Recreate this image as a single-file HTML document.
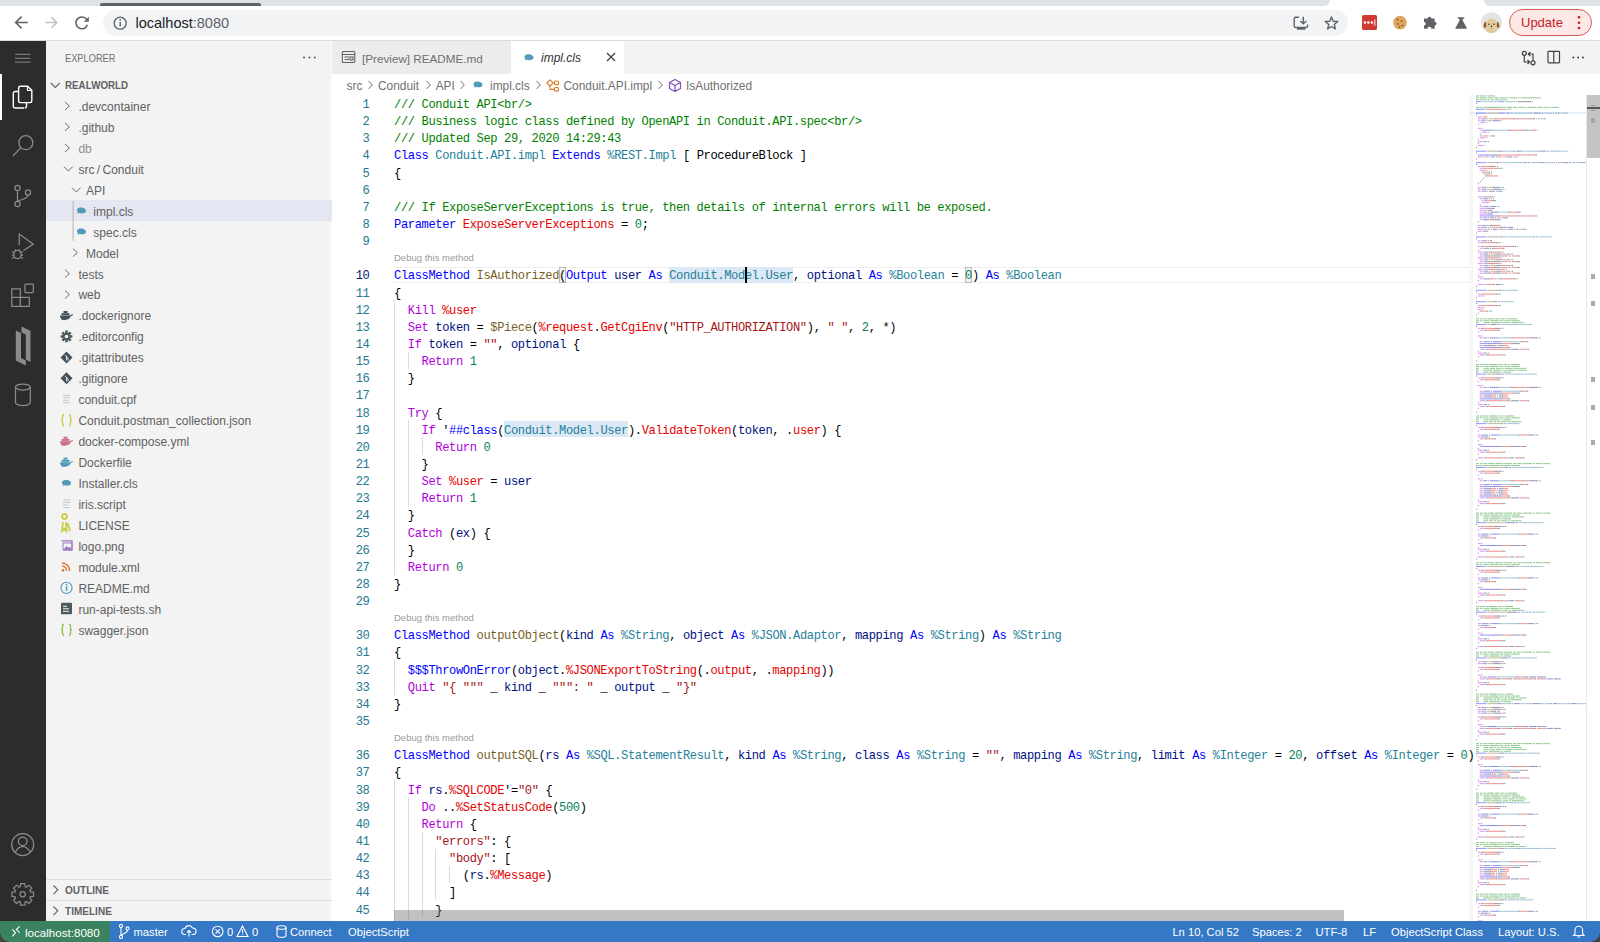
<!DOCTYPE html><html><head><meta charset="utf-8"><style>
*{box-sizing:border-box}
html,body{margin:0;padding:0}
body{width:1600px;height:942px;overflow:hidden;position:relative;background:#fff;font-family:"Liberation Sans",sans-serif;}
.a{position:absolute}
.tx{position:absolute;white-space:pre}
.code{position:absolute;white-space:pre;font-family:"Liberation Mono",monospace;font-size:12.1px;letter-spacing:-0.38px;line-height:17.14px;height:17.14px;color:#000}
.ln{position:absolute;white-space:pre;font-family:"Liberation Mono",monospace;font-size:12.1px;letter-spacing:-0.38px;line-height:17.14px;color:#237893;text-align:right;width:40.4px;left:329px}
.c{color:#008000}.k{color:#0000ff}.t{color:#267f99}.f{color:#795e26}.v{color:#001080}.p{color:#af00db}.r{color:#e50000}.s{color:#a31515}.n{color:#098658}
.lens{position:absolute;left:394px;font-size:9.5px;color:#999;white-space:pre}
.sb{position:absolute;top:921.5px;height:21px;line-height:21px;font-size:11.2px;color:#fff;white-space:pre}
</style></head><body>

<div class="a" style="left:0;top:0;width:1600px;height:41px;background:#fff"></div>
<div class="a" style="left:0;top:0;width:1330px;height:5.5px;background:#dee1e6;border-bottom-right-radius:6px"></div>
<div class="a" style="left:1484px;top:0;width:116px;height:5.5px;background:#dee1e6;border-bottom-left-radius:6px"></div>
<div class="a" style="left:100px;top:2.5px;width:161px;height:3px;background:#5f6368;border-radius:2px 2px 0 0"></div>
<div class="a" style="left:0;top:40px;width:1600px;height:1px;background:#dadce0"></div>
<div class="a" style="left:103px;top:9.5px;width:1245px;height:26px;background:#f1f3f4;border-radius:13px"></div>
<div class="tx" style="left:135.5px;top:14px;font-size:14.5px;line-height:18px;color:#202124">localhost<span style="color:#5f6368">:8080</span></div>
<div class="a" style="left:1509px;top:9px;width:83px;height:27px;background:#fce8e6;border:1.5px solid #d35b52;border-radius:14px"></div>
<div class="tx" style="left:1521px;top:14px;font-size:13px;line-height:18px;color:#c5221f">Update</div>
<div class="a" style="left:0;top:41px;width:46px;height:880px;background:#2c2c2c"></div>
<div class="a" style="left:46px;top:41px;width:285.2px;height:880px;background:#f3f3f3"></div>
<div class="a" style="left:331.5px;top:41px;width:1268.5px;height:33px;background:#f3f3f3"></div>
<div class="a" style="left:331.5px;top:41px;width:179.5px;height:33px;background:#ececec"></div>
<div class="a" style="left:511px;top:41px;width:113px;height:33px;background:#fff"></div>
<div class="tx" style="left:362px;top:49.6px;font-size:11.7px;line-height:17px;color:#6f6f6f">[Preview] README.md</div>
<div class="tx" style="left:541px;top:49.6px;font-size:12px;line-height:17px;color:#333;font-style:italic">impl.cls</div>
<div class="a" style="left:0;top:74px;width:2px;height:45.7px;background:#fff"></div>
<div class="tx" style="left:64.6px;top:51.5px;font-size:10.6px;line-height:12px;color:#6f6f6f;transform:scaleX(0.875);transform-origin:0 0">EXPLORER</div>
<div class="tx" style="left:64.6px;top:78.8px;font-size:10.6px;line-height:12px;color:#616161;font-weight:bold;transform:scaleX(0.925);transform-origin:0 0">REALWORLD</div>
<div class="tx" style="left:78.4px;top:98.90px;font-size:12px;line-height:17px;color:#616161">.devcontainer</div>
<div class="tx" style="left:78.4px;top:119.85px;font-size:12px;line-height:17px;color:#616161">.github</div>
<div class="tx" style="left:78.4px;top:140.80px;font-size:12px;line-height:17px;color:#8e8e8e">db</div>
<div class="tx" style="left:78.4px;top:161.75px;font-size:12px;line-height:17px;color:#616161">src<span style='margin:0 2.4px'>/</span>Conduit</div>
<div class="tx" style="left:86px;top:182.70px;font-size:12px;line-height:17px;color:#616161">API</div>
<div class="a" style="left:46px;top:200.25px;width:285.5px;height:21px;background:#e4e6f1"></div>
<div class="tx" style="left:93.3px;top:203.65px;font-size:12px;line-height:17px;color:#616161">impl.cls</div>
<div class="tx" style="left:93.3px;top:224.60px;font-size:12px;line-height:17px;color:#616161">spec.cls</div>
<div class="tx" style="left:86px;top:245.55px;font-size:12px;line-height:17px;color:#616161">Model</div>
<div class="tx" style="left:78.4px;top:266.50px;font-size:12px;line-height:17px;color:#616161">tests</div>
<div class="tx" style="left:78.4px;top:287.45px;font-size:12px;line-height:17px;color:#616161">web</div>
<div class="tx" style="left:78.4px;top:308.40px;font-size:12px;line-height:17px;color:#616161">.dockerignore</div>
<div class="tx" style="left:78.4px;top:329.35px;font-size:12px;line-height:17px;color:#616161">.editorconfig</div>
<div class="tx" style="left:78.4px;top:350.30px;font-size:12px;line-height:17px;color:#616161">.gitattributes</div>
<div class="tx" style="left:78.4px;top:371.25px;font-size:12px;line-height:17px;color:#616161">.gitignore</div>
<div class="tx" style="left:78.4px;top:392.20px;font-size:12px;line-height:17px;color:#616161">conduit.cpf</div>
<div class="tx" style="left:78.4px;top:413.15px;font-size:12px;line-height:17px;color:#616161">Conduit.postman_collection.json</div>
<div class="tx" style="left:78.4px;top:434.10px;font-size:12px;line-height:17px;color:#616161">docker-compose.yml</div>
<div class="tx" style="left:78.4px;top:455.05px;font-size:12px;line-height:17px;color:#616161">Dockerfile</div>
<div class="tx" style="left:78.4px;top:476.00px;font-size:12px;line-height:17px;color:#616161">Installer.cls</div>
<div class="tx" style="left:78.4px;top:496.95px;font-size:12px;line-height:17px;color:#616161">iris.script</div>
<div class="tx" style="left:78.4px;top:517.90px;font-size:12px;line-height:17px;color:#616161">LICENSE</div>
<div class="tx" style="left:78.4px;top:538.85px;font-size:12px;line-height:17px;color:#616161">logo.png</div>
<div class="tx" style="left:78.4px;top:559.80px;font-size:12px;line-height:17px;color:#616161">module.xml</div>
<div class="tx" style="left:78.4px;top:580.75px;font-size:12px;line-height:17px;color:#616161">README.md</div>
<div class="tx" style="left:78.4px;top:601.70px;font-size:12px;line-height:17px;color:#616161">run-api-tests.sh</div>
<div class="tx" style="left:78.4px;top:622.65px;font-size:12px;line-height:17px;color:#616161">swagger.json</div>
<div class="a" style="left:46px;top:879px;width:285.5px;height:1px;background:#dcdcdc"></div>
<div class="a" style="left:46px;top:900px;width:285.5px;height:1px;background:#dcdcdc"></div>
<div class="tx" style="left:65px;top:884px;font-size:10.8px;line-height:12px;color:#616161;font-weight:bold;transform:scaleX(0.93);transform-origin:0 0">OUTLINE</div>
<div class="tx" style="left:65px;top:905px;font-size:10.8px;line-height:12px;color:#616161;font-weight:bold;transform:scaleX(0.93);transform-origin:0 0">TIMELINE</div>
<div class="tx" style="left:346.5px;top:77.6px;font-size:11.9px;line-height:17px;color:#6f6f6f">src</div>
<div class="tx" style="left:378px;top:77.6px;font-size:11.9px;line-height:17px;color:#6f6f6f">Conduit</div>
<div class="tx" style="left:435.7px;top:77.6px;font-size:11.9px;line-height:17px;color:#6f6f6f">API</div>
<div class="tx" style="left:490px;top:77.6px;font-size:11.9px;line-height:17px;color:#6f6f6f">impl.cls</div>
<div class="tx" style="left:563.5px;top:77.6px;font-size:11.9px;line-height:17px;color:#6f6f6f">Conduit.API.impl</div>
<div class="tx" style="left:686px;top:77.6px;font-size:11.9px;line-height:17px;color:#6f6f6f">IsAuthorized</div>
<div class="a" style="left:394px;top:266.80px;width:1076px;height:16.54px;border-top:1.5px solid #eeeeee;border-bottom:1.5px solid #eeeeee"></div>
<div class="a" style="left:669.28px;top:266.90px;width:123.88px;height:15.64px;background:#dbe8f5"></div>
<div class="a" style="left:504.11px;top:421.16px;width:123.88px;height:15.64px;background:#dbe8f5"></div>
<div class="a" style="left:559.17px;top:266.90px;width:6.88px;height:15.64px;border:1px solid #b9b9b9;background:#f3f3f3"></div>
<div class="a" style="left:965.21px;top:266.90px;width:6.88px;height:15.64px;border:1px solid #b9b9b9;background:#f3f3f3"></div>
<div class="a" style="left:394.00px;top:300.18px;width:1px;height:17.34px;background:#dadada"></div>
<div class="a" style="left:394.00px;top:317.32px;width:1px;height:17.34px;background:#dadada"></div>
<div class="a" style="left:394.00px;top:334.46px;width:1px;height:17.34px;background:#dadada"></div>
<div class="a" style="left:394.00px;top:351.60px;width:1px;height:17.34px;background:#dadada"></div>
<div class="a" style="left:407.76px;top:351.60px;width:1px;height:17.34px;background:#dadada"></div>
<div class="a" style="left:394.00px;top:368.74px;width:1px;height:17.34px;background:#dadada"></div>
<div class="a" style="left:394.00px;top:385.88px;width:1px;height:17.34px;background:#dadada"></div>
<div class="a" style="left:394.00px;top:403.02px;width:1px;height:17.34px;background:#dadada"></div>
<div class="a" style="left:394.00px;top:420.16px;width:1px;height:17.34px;background:#dadada"></div>
<div class="a" style="left:407.76px;top:420.16px;width:1px;height:17.34px;background:#dadada"></div>
<div class="a" style="left:394.00px;top:437.30px;width:1px;height:17.34px;background:#dadada"></div>
<div class="a" style="left:407.76px;top:437.30px;width:1px;height:17.34px;background:#dadada"></div>
<div class="a" style="left:421.53px;top:437.30px;width:1px;height:17.34px;background:#dadada"></div>
<div class="a" style="left:394.00px;top:454.44px;width:1px;height:17.34px;background:#dadada"></div>
<div class="a" style="left:407.76px;top:454.44px;width:1px;height:17.34px;background:#dadada"></div>
<div class="a" style="left:394.00px;top:471.58px;width:1px;height:17.34px;background:#dadada"></div>
<div class="a" style="left:407.76px;top:471.58px;width:1px;height:17.34px;background:#dadada"></div>
<div class="a" style="left:394.00px;top:488.72px;width:1px;height:17.34px;background:#dadada"></div>
<div class="a" style="left:407.76px;top:488.72px;width:1px;height:17.34px;background:#dadada"></div>
<div class="a" style="left:394.00px;top:505.86px;width:1px;height:17.34px;background:#dadada"></div>
<div class="a" style="left:394.00px;top:523.00px;width:1px;height:17.34px;background:#dadada"></div>
<div class="a" style="left:394.00px;top:540.14px;width:1px;height:17.34px;background:#dadada"></div>
<div class="a" style="left:394.00px;top:557.28px;width:1px;height:17.34px;background:#dadada"></div>
<div class="a" style="left:394.00px;top:660.12px;width:1px;height:17.34px;background:#dadada"></div>
<div class="a" style="left:394.00px;top:677.26px;width:1px;height:17.34px;background:#dadada"></div>
<div class="a" style="left:394.00px;top:780.10px;width:1px;height:17.34px;background:#dadada"></div>
<div class="a" style="left:394.00px;top:797.24px;width:1px;height:17.34px;background:#dadada"></div>
<div class="a" style="left:407.76px;top:797.24px;width:1px;height:17.34px;background:#dadada"></div>
<div class="a" style="left:394.00px;top:814.38px;width:1px;height:17.34px;background:#dadada"></div>
<div class="a" style="left:407.76px;top:814.38px;width:1px;height:17.34px;background:#dadada"></div>
<div class="a" style="left:394.00px;top:831.52px;width:1px;height:17.34px;background:#dadada"></div>
<div class="a" style="left:407.76px;top:831.52px;width:1px;height:17.34px;background:#dadada"></div>
<div class="a" style="left:421.53px;top:831.52px;width:1px;height:17.34px;background:#dadada"></div>
<div class="a" style="left:394.00px;top:848.66px;width:1px;height:17.34px;background:#dadada"></div>
<div class="a" style="left:407.76px;top:848.66px;width:1px;height:17.34px;background:#dadada"></div>
<div class="a" style="left:421.53px;top:848.66px;width:1px;height:17.34px;background:#dadada"></div>
<div class="a" style="left:435.29px;top:848.66px;width:1px;height:17.34px;background:#dadada"></div>
<div class="a" style="left:394.00px;top:865.80px;width:1px;height:17.34px;background:#dadada"></div>
<div class="a" style="left:407.76px;top:865.80px;width:1px;height:17.34px;background:#dadada"></div>
<div class="a" style="left:421.53px;top:865.80px;width:1px;height:17.34px;background:#dadada"></div>
<div class="a" style="left:435.29px;top:865.80px;width:1px;height:17.34px;background:#dadada"></div>
<div class="a" style="left:449.06px;top:865.80px;width:1px;height:17.34px;background:#dadada"></div>
<div class="a" style="left:394.00px;top:882.94px;width:1px;height:17.34px;background:#dadada"></div>
<div class="a" style="left:407.76px;top:882.94px;width:1px;height:17.34px;background:#dadada"></div>
<div class="a" style="left:421.53px;top:882.94px;width:1px;height:17.34px;background:#dadada"></div>
<div class="a" style="left:435.29px;top:882.94px;width:1px;height:17.34px;background:#dadada"></div>
<div class="a" style="left:394.00px;top:900.08px;width:1px;height:17.34px;background:#dadada"></div>
<div class="a" style="left:407.76px;top:900.08px;width:1px;height:17.34px;background:#dadada"></div>
<div class="a" style="left:421.53px;top:900.08px;width:1px;height:17.34px;background:#dadada"></div>
<div class="a" style="left:394.00px;top:917.22px;width:1px;height:17.34px;background:#dadada"></div>
<div class="a" style="left:407.76px;top:917.22px;width:1px;height:17.34px;background:#dadada"></div>
<div class="ln" style="top:97.00px;color:#237893">1</div>
<div class="code" style="left:394.0px;top:97.00px"><span class="c">/// Conduit API&lt;br/&gt;</span></div>
<div class="ln" style="top:114.14px;color:#237893">2</div>
<div class="code" style="left:394.0px;top:114.14px"><span class="c">/// Business logic class defined by OpenAPI in Conduit.API.spec&lt;br/&gt;</span></div>
<div class="ln" style="top:131.28px;color:#237893">3</div>
<div class="code" style="left:394.0px;top:131.28px"><span class="c">/// Updated Sep 29, 2020 14:29:43</span></div>
<div class="ln" style="top:148.42px;color:#237893">4</div>
<div class="code" style="left:394.0px;top:148.42px"><span class="k">Class</span> <span class="t">Conduit.API.impl</span> <span class="k">Extends</span> <span class="t">%REST.Impl</span> [ ProcedureBlock ]</div>
<div class="ln" style="top:165.56px;color:#237893">5</div>
<div class="code" style="left:394.0px;top:165.56px">{</div>
<div class="ln" style="top:182.70px;color:#237893">6</div>
<div class="code" style="left:394.0px;top:182.70px"></div>
<div class="ln" style="top:199.84px;color:#237893">7</div>
<div class="code" style="left:394.0px;top:199.84px"><span class="c">/// If ExposeServerExceptions is true, then details of internal errors will be exposed.</span></div>
<div class="ln" style="top:216.98px;color:#237893">8</div>
<div class="code" style="left:394.0px;top:216.98px"><span class="k">Parameter</span> <span class="r">ExposeServerExceptions</span> = <span class="n">0</span>;</div>
<div class="ln" style="top:234.12px;color:#237893">9</div>
<div class="code" style="left:394.0px;top:234.12px"></div>
<div class="lens" style="top:250.76px;line-height:14px">Debug this method</div>
<div class="ln" style="top:268.40px;color:#0b216f">10</div>
<div class="code" style="left:394.0px;top:268.40px"><span class="k">ClassMethod</span> <span class="f">IsAuthorized</span>(<span class="k">Output</span> <span class="v">user</span> <span class="k">As</span> <span class="t">Conduit.Model.User</span>, <span class="v">optional</span> <span class="k">As</span> <span class="t">%Boolean</span> = <span class="n">0</span>) <span class="k">As</span> <span class="t">%Boolean</span></div>
<div class="ln" style="top:285.54px;color:#237893">11</div>
<div class="code" style="left:394.0px;top:285.54px">{</div>
<div class="ln" style="top:302.68px;color:#237893">12</div>
<div class="code" style="left:394.0px;top:302.68px">  <span class="p">Kill</span> <span class="r">%user</span></div>
<div class="ln" style="top:319.82px;color:#237893">13</div>
<div class="code" style="left:394.0px;top:319.82px">  <span class="p">Set</span> <span class="v">token</span> = <span class="f">$Piece</span>(<span class="r">%request</span>.<span class="r">GetCgiEnv</span>(<span class="s">&quot;HTTP_AUTHORIZATION&quot;</span>), <span class="s">&quot; &quot;</span>, <span class="n">2</span>, *)</div>
<div class="ln" style="top:336.96px;color:#237893">14</div>
<div class="code" style="left:394.0px;top:336.96px">  <span class="p">If</span> <span class="v">token</span> = <span class="s">&quot;&quot;</span>, <span class="v">optional</span> {</div>
<div class="ln" style="top:354.10px;color:#237893">15</div>
<div class="code" style="left:394.0px;top:354.10px">    <span class="p">Return</span> <span class="n">1</span></div>
<div class="ln" style="top:371.24px;color:#237893">16</div>
<div class="code" style="left:394.0px;top:371.24px">  }</div>
<div class="ln" style="top:388.38px;color:#237893">17</div>
<div class="code" style="left:394.0px;top:388.38px"></div>
<div class="ln" style="top:405.52px;color:#237893">18</div>
<div class="code" style="left:394.0px;top:405.52px">  <span class="p">Try</span> {</div>
<div class="ln" style="top:422.66px;color:#237893">19</div>
<div class="code" style="left:394.0px;top:422.66px">    <span class="p">If</span> &#x27;<span class="k">##class</span>(<span class="t">Conduit.Model.User</span>).<span class="r">ValidateToken</span>(<span class="v">token</span>, .<span class="r">user</span>) {</div>
<div class="ln" style="top:439.80px;color:#237893">20</div>
<div class="code" style="left:394.0px;top:439.80px">      <span class="p">Return</span> <span class="n">0</span></div>
<div class="ln" style="top:456.94px;color:#237893">21</div>
<div class="code" style="left:394.0px;top:456.94px">    }</div>
<div class="ln" style="top:474.08px;color:#237893">22</div>
<div class="code" style="left:394.0px;top:474.08px">    <span class="p">Set</span> <span class="r">%user</span> = <span class="v">user</span></div>
<div class="ln" style="top:491.22px;color:#237893">23</div>
<div class="code" style="left:394.0px;top:491.22px">    <span class="p">Return</span> <span class="n">1</span></div>
<div class="ln" style="top:508.36px;color:#237893">24</div>
<div class="code" style="left:394.0px;top:508.36px">  }</div>
<div class="ln" style="top:525.50px;color:#237893">25</div>
<div class="code" style="left:394.0px;top:525.50px">  <span class="p">Catch</span> (<span class="v">ex</span>) {</div>
<div class="ln" style="top:542.64px;color:#237893">26</div>
<div class="code" style="left:394.0px;top:542.64px">  }</div>
<div class="ln" style="top:559.78px;color:#237893">27</div>
<div class="code" style="left:394.0px;top:559.78px">  <span class="p">Return</span> <span class="n">0</span></div>
<div class="ln" style="top:576.92px;color:#237893">28</div>
<div class="code" style="left:394.0px;top:576.92px">}</div>
<div class="ln" style="top:594.06px;color:#237893">29</div>
<div class="code" style="left:394.0px;top:594.06px"></div>
<div class="lens" style="top:610.70px;line-height:14px">Debug this method</div>
<div class="ln" style="top:628.34px;color:#237893">30</div>
<div class="code" style="left:394.0px;top:628.34px"><span class="k">ClassMethod</span> <span class="f">outputObject</span>(<span class="v">kind</span> <span class="k">As</span> <span class="t">%String</span>, <span class="v">object</span> <span class="k">As</span> <span class="t">%JSON.Adaptor</span>, <span class="v">mapping</span> <span class="k">As</span> <span class="t">%String</span>) <span class="k">As</span> <span class="t">%String</span></div>
<div class="ln" style="top:645.48px;color:#237893">31</div>
<div class="code" style="left:394.0px;top:645.48px">{</div>
<div class="ln" style="top:662.62px;color:#237893">32</div>
<div class="code" style="left:394.0px;top:662.62px">  <span class="k">$$$ThrowOnError</span>(<span class="v">object</span>.<span class="r">%JSONExportToString</span>(.<span class="r">output</span>, .<span class="r">mapping</span>))</div>
<div class="ln" style="top:679.76px;color:#237893">33</div>
<div class="code" style="left:394.0px;top:679.76px">  <span class="p">Quit</span> <span class="s">&quot;{ &quot;&quot;&quot;</span> _ <span class="v">kind</span> _ <span class="s">&quot;&quot;&quot;: &quot;</span> _ <span class="v">output</span> _ <span class="s">&quot;}&quot;</span></div>
<div class="ln" style="top:696.90px;color:#237893">34</div>
<div class="code" style="left:394.0px;top:696.90px">}</div>
<div class="ln" style="top:714.04px;color:#237893">35</div>
<div class="code" style="left:394.0px;top:714.04px"></div>
<div class="lens" style="top:730.68px;line-height:14px">Debug this method</div>
<div class="ln" style="top:748.32px;color:#237893">36</div>
<div class="code" style="left:394.0px;top:748.32px"><span class="k">ClassMethod</span> <span class="f">outputSQL</span>(<span class="v">rs</span> <span class="k">As</span> <span class="t">%SQL.StatementResult</span>, <span class="v">kind</span> <span class="k">As</span> <span class="t">%String</span>, <span class="v">class</span> <span class="k">As</span> <span class="t">%String</span> = <span class="s">&quot;&quot;</span>, <span class="v">mapping</span> <span class="k">As</span> <span class="t">%String</span>, <span class="v">limit</span> <span class="k">As</span> <span class="t">%Integer</span> = <span class="n">20</span>, <span class="v">offset</span> <span class="k">As</span> <span class="t">%Integer</span> = <span class="n">0</span>)</div>
<div class="ln" style="top:765.46px;color:#237893">37</div>
<div class="code" style="left:394.0px;top:765.46px">{</div>
<div class="ln" style="top:782.60px;color:#237893">38</div>
<div class="code" style="left:394.0px;top:782.60px">  <span class="p">If</span> <span class="v">rs</span>.<span class="r">%SQLCODE</span>&#x27;=<span class="s">&quot;0&quot;</span> {</div>
<div class="ln" style="top:799.74px;color:#237893">39</div>
<div class="code" style="left:394.0px;top:799.74px">    <span class="p">Do</span> ..<span class="r">%SetStatusCode</span>(<span class="n">500</span>)</div>
<div class="ln" style="top:816.88px;color:#237893">40</div>
<div class="code" style="left:394.0px;top:816.88px">    <span class="p">Return</span> {</div>
<div class="ln" style="top:834.02px;color:#237893">41</div>
<div class="code" style="left:394.0px;top:834.02px">      <span class="s">&quot;errors&quot;</span>: {</div>
<div class="ln" style="top:851.16px;color:#237893">42</div>
<div class="code" style="left:394.0px;top:851.16px">        <span class="s">&quot;body&quot;</span>: [</div>
<div class="ln" style="top:868.30px;color:#237893">43</div>
<div class="code" style="left:394.0px;top:868.30px">          (<span class="v">rs</span>.<span class="r">%Message</span>)</div>
<div class="ln" style="top:885.44px;color:#237893">44</div>
<div class="code" style="left:394.0px;top:885.44px">        ]</div>
<div class="ln" style="top:902.58px;color:#237893">45</div>
<div class="code" style="left:394.0px;top:902.58px">      }</div>
<div class="ln" style="top:919.72px;color:#237893">46</div>
<div class="code" style="left:394.0px;top:919.72px">    }</div>
<div class="a" style="left:744.98px;top:266.90px;width:2px;height:16.14px;background:#000"></div>
<div class="a" style="left:1470px;top:112.14px;width:116px;height:1.91px;background:#e8f0fa"></div>
<div class="a" style="left:1467px;top:94.5px;width:6px;height:826.5px;background:linear-gradient(to right, rgba(0,0,0,0), rgba(0,0,0,0.04))"></div>
<div class="a" style="left:394.4px;top:910px;width:949.3px;height:10.6px;background:rgba(100,100,100,0.4)"></div>
<div class="a" style="left:1586px;top:94.5px;width:1px;height:826.5px;background:#e9e9e9"></div>
<div class="a" style="left:1587px;top:95px;width:13px;height:62.6px;background:#c4c4c4"></div>
<div class="a" style="left:1587px;top:107px;width:13px;height:2px;background:#555"></div>
<div class="a" style="left:1591px;top:105px;width:4px;height:1.3px;background:#999"></div>
<div class="a" style="left:1591px;top:109.8px;width:4px;height:1.3px;background:#999"></div>
<div class="a" style="left:1591px;top:117.5px;width:4px;height:5.5px;background:#a5a5a5"></div>
<div class="a" style="left:1591px;top:274.3px;width:4px;height:5px;background:#aaa"></div>
<div class="a" style="left:1591px;top:301.1px;width:4px;height:5px;background:#aaa"></div>
<div class="a" style="left:1591px;top:376.5px;width:4px;height:5px;background:#aaa"></div>
<div class="a" style="left:1591px;top:405.3px;width:4px;height:5px;background:#aaa"></div>
<div class="a" style="left:1591px;top:439.5px;width:4px;height:5px;background:#aaa"></div>
<div class="a" style="left:0;top:921px;width:1600px;height:21px;background:#3478c6"></div>
<div class="a" style="left:0;top:921px;width:110px;height:21px;background:#3b8360"></div>
<div class="sb" style="left:25px;font-size:11.6px">localhost:8080</div>
<div class="sb" style="left:133.5px">master</div>
<div class="sb" style="left:227px">0</div>
<div class="sb" style="left:252px">0</div>
<div class="sb" style="left:290px">Connect</div>
<div class="sb" style="left:348px">ObjectScript</div>
<div class="sb" style="left:1172.4px">Ln 10, Col 52</div>
<div class="sb" style="left:1252px">Spaces: 2</div>
<div class="sb" style="left:1315.5px">UTF-8</div>
<div class="sb" style="left:1363px">LF</div>
<div class="sb" style="left:1391px">ObjectScript Class</div>
<div class="sb" style="left:1498px">Layout: U.S.</div>
<div class="a" style="left:0;top:932px;width:10px;height:10px;background:radial-gradient(circle at 100% 0%, transparent 9.5px, #444 10px)"></div>
<div class="a" style="left:1590px;top:932px;width:10px;height:10px;background:radial-gradient(circle at 0% 0%, transparent 9.5px, #444 10px)"></div>
<svg class="a" style="left:0;top:0" width="1600" height="942" viewBox="0 0 1600 942"><g fill="none" stroke="#5f6368" stroke-width="1.6" stroke-linecap="square"><path d="M27 22.5H16M21 17.2L15.7 22.5L21 27.8"/></g><g fill="none" stroke="#bdc1c6" stroke-width="1.6"><path d="M45.5 22.5H56.8M51.5 17.2L56.8 22.5L51.5 27.8"/></g><g fill="none" stroke="#5f6368" stroke-width="1.6"><path d="M86.6 19.4A5.9 5.9 0 1 0 87.4 24.8"/></g><path d="M88.9 16.8V21.8H83.8Z" fill="#5f6368"/><circle cx="120.2" cy="23.2" r="6" fill="none" stroke="#5f6368" stroke-width="1.3"/><rect x="119.5" y="21.8" width="1.4" height="4.5" fill="#5f6368"/><circle cx="120.2" cy="19.8" r="0.9" fill="#5f6368"/><g fill="none" stroke="#5f6368" stroke-width="1.4"><path d="M1299 17.3H1295.6A1.4 1.4 0 0 0 1294.2 18.7V26.1A1.4 1.4 0 0 0 1295.6 27.5H1306.2A1.4 1.4 0 0 0 1307.6 26.1V24.6"/><path d="M1303.3 16.8V23.8M1300.3 20.9L1303.3 23.8L1306.3 20.9"/></g><rect x="1297" y="27.5" width="8.3" height="2.2" fill="#5f6368"/><polygon points="1331.50,17.00 1333.20,21.25 1337.78,21.56 1334.26,24.50 1335.38,28.94 1331.50,26.50 1327.62,28.94 1328.74,24.50 1325.22,21.56 1329.80,21.25" fill="none" stroke="#5f6368" stroke-width="1.4" stroke-linejoin="round"/><rect x="1362" y="15" width="15" height="15" rx="1.5" fill="#cf3a34"/><circle cx="1364.9" cy="22.6" r="1.25" fill="#fff"/><circle cx="1368.4" cy="22.6" r="1.25" fill="#fff"/><circle cx="1371.9" cy="22.6" r="1.25" fill="#fff"/><rect x="1374.4" y="19.3" width="0.9" height="6.6" fill="#fff"/><circle cx="1400" cy="22.6" r="6.8" fill="#dba55c"/><circle cx="1397.5" cy="19.5" r="0.8" fill="#6b3f1d"/><circle cx="1401.5" cy="21" r="0.8" fill="#6b3f1d"/><circle cx="1398" cy="24" r="0.8" fill="#6b3f1d"/><circle cx="1402.5" cy="25.5" r="0.8" fill="#6b3f1d"/><circle cx="1399.5" cy="27" r="0.8" fill="#6b3f1d"/><path d="M1424 18.6H1427.6A1.9 1.9 0 1 1 1431.4 18.6H1434.7V21.7A1.9 1.9 0 1 1 1434.7 25.5V28.7H1431.4A1.9 1.9 0 0 0 1427.6 28.7H1424V25.5A1.7 1.7 0 0 0 1424 21.9Z" fill="#5f6368"/><path d="M1457.8 17.2H1464.2V18.8H1462.8V20.8L1466.9 28.1Q1467.1 28.8 1466.3 28.8H1455.9Q1455.1 28.8 1455.4 28.1L1459.4 20.8V18.8H1457.8Z" fill="#5f6368"/><circle cx="1491.5" cy="22.7" r="10.5" fill="#e3e3e3"/><clipPath id="av"><circle cx="1491.5" cy="22.7" r="10.5"/></clipPath><g clip-path="url(#av)"><ellipse cx="1491.5" cy="26.5" rx="6.4" ry="7.8" fill="#e3c99e"/><path d="M1486 21.5Q1483 23 1483.8 28L1486.2 27Z M1497 21.5Q1500 23 1499.2 28L1496.8 27Z" fill="#8a5a2b"/><circle cx="1488.9" cy="24.3" r="0.8" fill="#333"/><circle cx="1494.1" cy="24.3" r="0.8" fill="#333"/><circle cx="1491.5" cy="26.3" r="0.8" fill="#222"/><ellipse cx="1491.5" cy="28.2" rx="0.9" ry="0.5" fill="#c98a7a"/></g><circle cx="1579" cy="17.2" r="1.3" fill="#c5221f"/><circle cx="1579" cy="22.7" r="1.3" fill="#c5221f"/><circle cx="1579" cy="28.1" r="1.3" fill="#c5221f"/><g stroke="#8b8b8b" stroke-width="1.25" fill="none"><path d="M15 54.3H30.5M15 58.3H30.5M15 62.2H30.5" stroke="#777"/><path d="M24 108H15A1.8 1.8 0 0 1 13.3 106.2V93.3A1.8 1.8 0 0 1 15 91.5H18.6" stroke="#fff" stroke-width="1.4"/><path d="M26.5 102.6V106.2A1.8 1.8 0 0 1 24.7 108" stroke="#fff" stroke-width="1.4"/><path d="M20.4 86.2H27.6L31.8 90.4V100.8A1.8 1.8 0 0 1 30 102.6H20.4A1.8 1.8 0 0 1 18.6 100.8V88A1.8 1.8 0 0 1 20.4 86.2Z" stroke="#fff" stroke-width="1.4"/><path d="M27.5 86.5V90.5H31.5" stroke="#fff" stroke-width="1.2"/><circle cx="25.8" cy="142.7" r="7"/><path d="M20.8 147.8L13 156"/><circle cx="17.5" cy="188" r="2.6"/><circle cx="28" cy="192.5" r="2.6"/><circle cx="17.5" cy="204" r="2.6"/><path d="M17.5 190.6V201.4M28 195.1C28 199 22 199 18.5 201"/><path d="M19.2 245V234L33.3 244.2L23.5 250.5"/><ellipse cx="17.5" cy="254.5" rx="3.6" ry="4.2"/><path d="M12 251.5L14.3 252.8M12 255H14M12 258.5L14.3 257.2M23 251.5L20.7 252.8M23 255H21M23 258.5L20.7 257.2M15 249.5L16 250.8M20 249.5L19 250.8"/><path d="M11.8 288.8H20.3V297.3H29.3V306.3H11.8Z M11.8 297.3H20.3V306.3"/><rect x="25" y="284.2" width="8.3" height="8.3" rx="0.8"/><path d="M15.5 387V402.5A7.4 3 0 0 0 30.3 402.5V387"/><ellipse cx="22.9" cy="387" rx="7.4" ry="3"/><circle cx="22.7" cy="844.6" r="11"/><circle cx="22.7" cy="841.3" r="4.3"/><path d="M15.2 852.5C17 848.5 20 846.6 22.7 846.6C25.4 846.6 28.4 848.5 30.2 852.5"/></g><path d="M15.8 330.5L21 333V358L25.8 360.5V365.5L15.8 360.5Z" fill="#8b8b8b"/><path d="M21.5 326.5L30.5 331V362L25.8 359.5V334.5L21.5 332.5Z" fill="#8b8b8b"/><polygon points="30.34,891.94 33.48,892.11 33.48,896.49 30.34,896.66 29.78,898.03 31.87,900.38 28.78,903.47 26.43,901.38 25.06,901.94 24.89,905.08 20.51,905.08 20.34,901.94 18.97,901.38 16.62,903.47 13.53,900.38 15.62,898.03 15.06,896.66 11.92,896.49 11.92,892.11 15.06,891.94 15.62,890.57 13.53,888.22 16.62,885.13 18.97,887.22 20.34,886.66 20.51,883.52 24.89,883.52 25.06,886.66 26.43,887.22 28.78,885.13 31.87,888.22 29.78,890.57" fill="none" stroke="#8b8b8b" stroke-width="1.25" stroke-linejoin="round"/><circle cx="22.7" cy="894.3" r="2.6" fill="none" stroke="#8b8b8b" stroke-width="1.25"/><circle cx="304" cy="57.5" r="1.05" fill="#616161"/><circle cx="309.5" cy="57.5" r="1.05" fill="#616161"/><circle cx="314.8" cy="57.5" r="1.05" fill="#616161"/><path d="M50.8 83L55.3 87.5L59.8 83" fill="none" stroke="#616161" stroke-width="1.1"/><path d="M65 102.0L69.3 106.0L65 110.0" fill="none" stroke="#6a6a6a" stroke-width="1"/><path d="M65 122.95L69.3 126.95L65 130.95" fill="none" stroke="#6a6a6a" stroke-width="1"/><path d="M65 143.9L69.3 147.9L65 151.9" fill="none" stroke="#6a6a6a" stroke-width="1"/><path d="M64 166.65L68.3 171.04999999999998L72.6 166.65" fill="none" stroke="#6a6a6a" stroke-width="1"/><path d="M72 187.60000000000002L76.3 192.0L80.6 187.60000000000002" fill="none" stroke="#6a6a6a" stroke-width="1"/><path d="M77 209.55C78 207.55 81 207.15 83.5 207.95C85.5 208.55 86.5 210.25 85.8 211.75C85 213.55 81.5 213.75 79.5 212.95L77.3 213.55L78 212.05C77.2 211.35 76.8 210.45 77 209.55Z" fill="#519aba"/><path d="M77 230.5C78 228.5 81 228.1 83.5 228.89999999999998C85.5 229.5 86.5 231.2 85.8 232.7C85 234.5 81.5 234.7 79.5 233.89999999999998L77.3 234.5L78 233.0C77.2 232.29999999999998 76.8 231.39999999999998 77 230.5Z" fill="#519aba"/><path d="M73 248.65L77.3 252.65L73 256.65" fill="none" stroke="#6a6a6a" stroke-width="1"/><path d="M65 269.6L69.3 273.6L65 277.6" fill="none" stroke="#6a6a6a" stroke-width="1"/><path d="M65 290.54999999999995L69.3 294.54999999999995L65 298.54999999999995" fill="none" stroke="#6a6a6a" stroke-width="1"/><path d="M60 315.5H70.5C71.3 314.3 72.5 314.0 73 314.7C72.5 315.8 71.5 316.1 71 316.1C69.5 320.0 65 320.5 62.5 320.0C60.8 319.0 60 317.3 60 315.5Z" fill="#41535b"/><rect x="61.5" y="313.2" width="8" height="2" fill="#41535b"/><rect x="63.5" y="311.0" width="4" height="2" fill="#41535b"/><polygon points="70.30,335.19 72.36,335.14 72.36,337.76 70.30,337.71 70.07,338.25 71.57,339.66 69.71,341.52 68.30,340.02 67.76,340.25 67.81,342.31 65.19,342.31 65.24,340.25 64.70,340.02 63.29,341.52 61.43,339.66 62.93,338.25 62.70,337.71 60.64,337.76 60.64,335.14 62.70,335.19 62.93,334.65 61.43,333.24 63.29,331.38 64.70,332.88 65.24,332.65 65.19,330.59 67.81,330.59 67.76,332.65 68.30,332.88 69.71,331.38 71.57,333.24 70.07,334.65" fill="#4d5a5e"/><circle cx="66.5" cy="336.45" r="1.8" fill="#f3f3f3"/><path d="M66.5 351.4L72.5 357.4L66.5 363.4L60.5 357.4Z" fill="#41535b"/><path d="M65 354.9L68 357.9V360.4M66.5 356.4V360.4" stroke="#f3f3f3" stroke-width="0.9" fill="none"/><path d="M66.5 372.34999999999997L72.5 378.34999999999997L66.5 384.34999999999997L60.5 378.34999999999997Z" fill="#41535b"/><path d="M65 375.84999999999997L68 378.84999999999997V381.34999999999997M66.5 377.34999999999997V381.34999999999997" stroke="#f3f3f3" stroke-width="0.9" fill="none"/><path d="M63 395.3H70M63 397.8H70M63 400.3H68.5M63 402.8H70" stroke="#c5c5c5" stroke-width="1"/><path d="M64 414.75C62.5 414.75 62.5 415.75 62.5 417.25V418.75C62.5 419.75 62 420.25 61 420.25C62 420.25 62.5 420.75 62.5 421.75V423.25C62.5 424.75 62.5 425.75 64 425.75M69 414.75C70.5 414.75 70.5 415.75 70.5 417.25V418.75C70.5 419.75 71 420.25 72 420.25C71 420.25 70.5 420.75 70.5 421.75V423.25C70.5 424.75 70.5 425.75 69 425.75" fill="none" stroke="#cbcb41" stroke-width="1.3"/><path d="M60 441.2H70.5C71.3 440.0 72.5 439.7 73 440.4C72.5 441.5 71.5 441.8 71 441.8C69.5 445.7 65 446.2 62.5 445.7C60.8 444.7 60 443.0 60 441.2Z" fill="#cc6f8a"/><rect x="61.5" y="438.9" width="8" height="2" fill="#cc6f8a"/><rect x="63.5" y="436.7" width="4" height="2" fill="#cc6f8a"/><path d="M60 462.15H70.5C71.3 460.95 72.5 460.65 73 461.34999999999997C72.5 462.45 71.5 462.75 71 462.75C69.5 466.65 65 467.15 62.5 466.65C60.8 465.65 60 463.95 60 462.15Z" fill="#519aba"/><rect x="61.5" y="459.84999999999997" width="8" height="2" fill="#519aba"/><rect x="63.5" y="457.65" width="4" height="2" fill="#519aba"/><path d="M62 481.9C63 479.9 66 479.49999999999994 68.5 480.29999999999995C70.5 480.9 71.5 482.59999999999997 70.8 484.09999999999997C70 485.9 66.5 486.09999999999997 64.5 485.29999999999995L62.3 485.9L63 484.4C62.2 483.7 61.8 482.79999999999995 62 481.9Z" fill="#519aba"/><path d="M63 500.05H70M63 502.55H70M63 505.05H68.5M63 507.55H70" stroke="#c5c5c5" stroke-width="1"/><path d="M64.5 519.0A2.5 2.5 0 1 1 64.6 519.0M63 522.0L62 531.0L64.5 529.0L66.5 531.0L66 522.0M67.5 523.0L70 531.0" stroke="#cbcb41" stroke-width="1.8" fill="none"/><path d="M61.5 540.95H72V549.95H63" stroke="#a074c4" stroke-width="1.2" fill="none"/><path d="M63 549.95V542.95H72V549.95Z" fill="none" stroke="#a074c4" stroke-width="1"/><path d="M63.5 549.45L66.5 545.95L68.5 547.95L70 546.45L71.5 549.45Z" fill="#a074c4"/><circle cx="63" cy="570.4" r="1.3" fill="#e37933"/><path d="M62 565.9A4.5 4.5 0 0 1 66.5 570.9M62 562.9A7.5 7.5 0 0 1 69.5 570.9" stroke="#e37933" stroke-width="1.5" fill="none"/><circle cx="66.5" cy="587.8499999999999" r="5.6" fill="none" stroke="#519aba" stroke-width="1.1"/><rect x="65.8" y="586.3499999999999" width="1.5" height="4.5" fill="#519aba"/><circle cx="66.5" cy="584.6499999999999" r="0.9" fill="#519aba"/><rect x="61" y="602.8" width="11" height="11.5" rx="0.8" fill="#4d5a5e"/><path d="M63 606.3H67M63 608.8H69M63 611.3H69" stroke="#f3f3f3" stroke-width="1"/><path d="M64 624.25C62.5 624.25 62.5 625.25 62.5 626.75V628.25C62.5 629.25 62 629.75 61 629.75C62 629.75 62.5 630.25 62.5 631.25V632.75C62.5 634.25 62.5 635.25 64 635.25M69 624.25C70.5 624.25 70.5 625.25 70.5 626.75V628.25C70.5 629.25 71 629.75 72 629.75C71 629.75 70.5 630.25 70.5 631.25V632.75C70.5 634.25 70.5 635.25 69 635.25" fill="none" stroke="#8dc149" stroke-width="1.3"/><rect x="72.6" y="200.8" width="1" height="40" fill="#b3b3b3"/><path d="M53.5 885.5L57.8 889.8L53.5 894.1M53.5 906.5L57.8 910.8L53.5 915.1" fill="none" stroke="#616161" stroke-width="1.1"/><g fill="none" stroke="#616161" stroke-width="1.1"><rect x="342.3" y="51.5" width="12.5" height="11" rx="1"/><path d="M342.3 54.5H354.8M344.5 57H349M344.5 59.5H349"/><rect x="350" y="57" width="3" height="3"/></g><path d="M524.5 56.3C525.5 54.3 528.5 53.9 531.0 54.7C533.0 55.3 534.0 57.0 533.3 58.5C532.5 60.3 529.0 60.5 527.0 59.7L524.8 60.3L525.5 58.8C524.7 58.1 524.3 57.2 524.5 56.3Z" fill="#519aba"/><path d="M607 53L615 61M615 53L607 61" stroke="#424242" stroke-width="1.3"/><g fill="none" stroke="#424242" stroke-width="1.2"><circle cx="1524.3" cy="53.3" r="2"/><circle cx="1533" cy="62.8" r="2"/><path d="M1524.3 55.3V62H1529.5M1527.5 60L1529.5 62L1527.5 64M1533 60.8V54H1528.3M1530.3 52L1528.3 54L1530.3 56"/><rect x="1548" y="51.3" width="11.5" height="11.5" rx="0.8"/><path d="M1553.75 51.3V62.8"/></g><circle cx="1573.3" cy="57.5" r="1" fill="#424242"/><circle cx="1578.1" cy="57.5" r="1" fill="#424242"/><circle cx="1582.9" cy="57.5" r="1" fill="#424242"/><path d="M368.5 81L372.3 85L368.5 89" fill="none" stroke="#6f6f6f" stroke-width="1"/><path d="M426.5 81L430.3 85L426.5 89" fill="none" stroke="#6f6f6f" stroke-width="1"/><path d="M460.5 81L464.3 85L460.5 89" fill="none" stroke="#6f6f6f" stroke-width="1"/><path d="M536.5 81L540.3 85L536.5 89" fill="none" stroke="#6f6f6f" stroke-width="1"/><path d="M658.5 81L662.3 85L658.5 89" fill="none" stroke="#6f6f6f" stroke-width="1"/><path d="M473.5 83.5C474.5 81.5 477.5 81.10000000000001 480.0 81.9C482.0 82.5 483.0 84.2 482.3 85.7C481.5 87.5 478.0 87.7 476.0 86.9L473.8 87.5L474.5 86.0C473.7 85.3 473.3 84.4 473.5 83.5Z" fill="#519aba"/><g fill="none" stroke="#d67e2c" stroke-width="1.15" stroke-linejoin="round"><path d="M550 79.8L553.2 83L550 86.2L546.8 83Z"/><path d="M550 86.2V89.3H554M553.2 83H554.5"/><rect x="554.5" y="81" width="4" height="3.6" rx="1"/><rect x="554.5" y="87.5" width="4" height="3.6" rx="1"/></g><g fill="none" stroke="#7d4fbf" stroke-width="1.2" stroke-linejoin="round"><path d="M675 79.5L680.5 82.5V88.5L675 91.5L669.5 88.5V82.5Z M669.5 82.5L675 85.5L680.5 82.5M675 85.5V91.5"/></g><g opacity="0.6" stroke-width="1.0" stroke-dasharray="0.75 0.2" fill="none"><path stroke="#008000" d="M1476.00 95.95h2.86M1479.81 95.95h6.66M1487.42 95.95h7.62M1476.00 97.86h2.86M1479.81 97.86h7.62M1488.38 97.86h4.76M1494.09 97.86h4.76M1499.80 97.86h6.66M1507.42 97.86h1.90M1510.27 97.86h6.66M1517.89 97.86h1.90M1520.74 97.86h19.99M1476.00 99.76h2.86M1479.81 99.76h6.66M1487.42 99.76h2.86M1491.23 99.76h2.86M1495.04 99.76h3.81M1499.80 99.76h7.62M1476.00 107.38h2.86M1479.81 107.38h1.90M1482.66 107.38h20.94M1504.56 107.38h1.90M1507.42 107.38h4.76M1513.13 107.38h3.81M1517.89 107.38h6.66M1525.50 107.38h1.90M1528.36 107.38h7.62M1536.93 107.38h5.71M1543.59 107.38h3.81M1548.35 107.38h1.90M1551.21 107.38h7.62M1476.00 318.83h2.86M1479.81 318.83h2.86M1483.62 318.83h2.86M1487.42 318.83h6.66M1495.04 318.83h4.76M1500.75 318.83h3.81M1505.51 318.83h1.90M1508.37 318.83h8.57M1476.00 320.74h2.86M1479.81 320.74h2.86M1483.62 320.74h5.71M1490.28 320.74h8.57M1499.80 320.74h3.81M1504.56 320.74h5.71M1511.22 320.74h8.57M1476.00 322.64h2.86M1483.62 322.64h6.66M1491.23 322.64h10.47M1502.66 322.64h5.71M1509.32 322.64h1.90M1512.18 322.64h12.38M1476.00 364.56h2.86M1479.81 364.56h4.76M1485.52 364.56h2.86M1489.33 364.56h7.62M1497.90 364.56h4.76M1503.61 364.56h3.81M1508.37 364.56h1.90M1511.22 364.56h8.57M1476.00 366.46h2.86M1479.81 366.46h2.86M1483.62 366.46h5.71M1490.28 366.46h8.57M1499.80 366.46h3.81M1504.56 366.46h5.71M1511.22 366.46h8.57M1476.00 368.37h2.86M1483.62 368.37h5.71M1490.28 368.37h4.76M1495.99 368.37h5.71M1502.66 368.37h1.90M1505.51 368.37h7.62M1514.08 368.37h12.38M1476.00 370.27h2.86M1483.62 370.27h8.57M1493.14 370.27h7.62M1501.70 370.27h1.90M1504.56 370.27h2.86M1508.37 370.27h6.66M1515.98 370.27h1.90M1518.84 370.27h7.62M1476.00 372.18h2.86M1483.62 372.18h4.76M1489.33 372.18h10.47M1500.75 372.18h1.90M1503.61 372.18h7.62M1476.00 415.99h2.86M1479.81 415.99h5.71M1486.47 415.99h1.90M1489.33 415.99h7.62M1497.90 415.99h3.81M1502.66 415.99h1.90M1505.51 415.99h8.57M1476.00 417.89h2.86M1479.81 417.89h2.86M1483.62 417.89h5.71M1490.28 417.89h8.57M1499.80 417.89h3.81M1504.56 417.89h5.71M1511.22 417.89h8.57M1476.00 419.80h2.86M1483.62 419.80h4.76M1489.33 419.80h10.47M1500.75 419.80h1.90M1503.61 419.80h7.62M1476.00 421.70h2.86M1483.62 421.70h4.76M1489.33 421.70h3.81M1494.09 421.70h1.90M1496.94 421.70h2.86M1500.75 421.70h6.66M1508.37 421.70h1.90M1511.22 421.70h10.47M1476.00 463.62h2.86M1479.81 463.62h2.86M1483.62 463.62h3.81M1488.38 463.62h5.71M1495.04 463.62h7.62M1503.61 463.62h8.57M1513.13 463.62h2.86M1516.94 463.62h4.76M1522.65 463.62h9.52M1533.12 463.62h1.90M1535.98 463.62h5.71M1542.64 463.62h7.62M1476.00 465.52h2.86M1479.81 465.52h2.86M1483.62 465.52h5.71M1490.28 465.52h8.57M1499.80 465.52h3.81M1504.56 465.52h5.71M1511.22 465.52h8.57M1476.00 513.14h2.86M1479.81 513.14h2.86M1483.62 513.14h3.81M1488.38 513.14h5.71M1495.04 513.14h7.62M1503.61 513.14h8.57M1513.13 513.14h2.86M1516.94 513.14h4.76M1522.65 513.14h9.52M1533.12 513.14h1.90M1535.98 513.14h5.71M1542.64 513.14h7.62M1476.00 515.05h2.86M1479.81 515.05h2.86M1483.62 515.05h5.71M1490.28 515.05h8.57M1499.80 515.05h3.81M1504.56 515.05h5.71M1511.22 515.05h8.57M1476.00 516.96h2.86M1483.62 516.96h6.66M1491.23 516.96h10.47M1502.66 516.96h5.71M1509.32 516.96h1.90M1512.18 516.96h12.38M1476.00 518.86h2.86M1483.62 518.86h4.76M1489.33 518.86h10.47M1500.75 518.86h1.90M1503.61 518.86h7.62M1476.00 520.77h2.86M1483.62 520.77h4.76M1489.33 520.77h3.81M1494.09 520.77h1.90M1496.94 520.77h2.86M1500.75 520.77h6.66M1508.37 520.77h1.90M1511.22 520.77h10.47M1476.00 562.68h2.86M1479.81 562.68h2.86M1483.62 562.68h3.81M1488.38 562.68h5.71M1495.04 562.68h7.62M1503.61 562.68h8.57M1513.13 562.68h2.86M1516.94 562.68h4.76M1522.65 562.68h9.52M1533.12 562.68h1.90M1535.98 562.68h5.71M1542.64 562.68h7.62M1476.00 564.58h2.86M1479.81 564.58h2.86M1483.62 564.58h5.71M1490.28 564.58h8.57M1499.80 564.58h3.81M1504.56 564.58h5.71M1511.22 564.58h8.57M1476.00 606.49h2.86M1479.81 606.49h5.71M1486.47 606.49h1.90M1489.33 606.49h7.62M1497.90 606.49h3.81M1502.66 606.49h1.90M1505.51 606.49h7.62M1476.00 608.40h2.86M1479.81 608.40h2.86M1483.62 608.40h5.71M1490.28 608.40h8.57M1499.80 608.40h3.81M1504.56 608.40h5.71M1511.22 608.40h8.57M1476.00 610.30h2.86M1483.62 610.30h6.66M1491.23 610.30h10.47M1502.66 610.30h5.71M1509.32 610.30h1.90M1512.18 610.30h12.38M1476.00 652.21h2.86M1479.81 652.21h2.86M1483.62 652.21h3.81M1488.38 652.21h5.71M1495.04 652.21h7.62M1503.61 652.21h8.57M1513.13 652.21h2.86M1516.94 652.21h4.76M1522.65 652.21h9.52M1533.12 652.21h1.90M1535.98 652.21h5.71M1542.64 652.21h7.62M1476.00 654.12h2.86M1479.81 654.12h2.86M1483.62 654.12h5.71M1490.28 654.12h8.57M1499.80 654.12h3.81M1504.56 654.12h5.71M1511.22 654.12h8.57M1476.00 656.02h2.86M1483.62 656.02h4.76M1489.33 656.02h10.47M1500.75 656.02h1.90M1503.61 656.02h7.62M1476.00 694.12h2.86M1479.81 694.12h5.71M1486.47 694.12h1.90M1489.33 694.12h7.62M1497.90 694.12h3.81M1502.66 694.12h1.90M1505.51 694.12h7.62M1476.00 696.03h2.86M1479.81 696.03h2.86M1483.62 696.03h5.71M1490.28 696.03h8.57M1499.80 696.03h3.81M1504.56 696.03h5.71M1511.22 696.03h8.57M1476.00 697.93h2.86M1483.62 697.93h8.57M1493.14 697.93h7.62M1501.70 697.93h1.90M1504.56 697.93h2.86M1508.37 697.93h6.66M1515.98 697.93h1.90M1518.84 697.93h7.62M1476.00 699.84h2.86M1483.62 699.84h4.76M1489.33 699.84h3.81M1494.09 699.84h1.90M1496.94 699.84h2.86M1500.75 699.84h6.66M1508.37 699.84h1.90M1511.22 699.84h10.47M1476.00 701.74h2.86M1483.62 701.74h4.76M1489.33 701.74h10.47M1500.75 701.74h1.90M1503.61 701.74h7.62M1476.00 743.65h2.86M1479.81 743.65h2.86M1483.62 743.65h3.81M1488.38 743.65h5.71M1495.04 743.65h7.62M1503.61 743.65h8.57M1513.13 743.65h2.86M1516.94 743.65h4.76M1522.65 743.65h9.52M1533.12 743.65h1.90M1535.98 743.65h5.71M1542.64 743.65h7.62M1476.00 745.56h2.86M1479.81 745.56h2.86M1483.62 745.56h5.71M1490.28 745.56h8.57M1499.80 745.56h3.81M1504.56 745.56h5.71M1511.22 745.56h8.57M1476.00 747.46h2.86M1483.62 747.46h4.76M1489.33 747.46h3.81M1494.09 747.46h1.90M1496.94 747.46h2.86M1500.75 747.46h6.66M1508.37 747.46h1.90M1511.22 747.46h10.47M1476.00 749.37h2.86M1483.62 749.37h5.71M1490.28 749.37h4.76M1495.99 749.37h5.71M1502.66 749.37h1.90M1505.51 749.37h7.62M1514.08 749.37h12.38M1476.00 751.27h2.86M1483.62 751.27h4.76M1489.33 751.27h10.47M1500.75 751.27h1.90M1503.61 751.27h7.62M1476.00 793.18h2.86M1479.81 793.18h2.86M1483.62 793.18h2.86M1487.42 793.18h6.66M1495.04 793.18h4.76M1500.75 793.18h3.81M1505.51 793.18h1.90M1508.37 793.18h8.57M1476.00 795.09h2.86M1479.81 795.09h2.86M1483.62 795.09h5.71M1490.28 795.09h8.57M1499.80 795.09h3.81M1504.56 795.09h5.71M1511.22 795.09h8.57M1476.00 796.99h2.86M1483.62 796.99h6.66M1491.23 796.99h10.47M1502.66 796.99h5.71M1509.32 796.99h1.90M1512.18 796.99h12.38M1476.00 798.90h2.86M1483.62 798.90h8.57M1493.14 798.90h7.62M1501.70 798.90h1.90M1504.56 798.90h2.86M1508.37 798.90h6.66M1515.98 798.90h1.90M1518.84 798.90h7.62M1476.00 800.80h2.86M1483.62 800.80h6.66M1491.23 800.80h10.47M1502.66 800.80h5.71M1509.32 800.80h1.90M1512.18 800.80h12.38M1476.00 842.71h2.86M1479.81 842.71h5.71M1486.47 842.71h1.90M1489.33 842.71h7.62M1497.90 842.71h3.81M1502.66 842.71h1.90M1505.51 842.71h8.57M1476.00 844.62h2.86M1479.81 844.62h2.86M1483.62 844.62h5.71M1490.28 844.62h8.57M1499.80 844.62h3.81M1504.56 844.62h5.71M1511.22 844.62h8.57M1476.00 846.52h2.86M1483.62 846.52h8.57M1493.14 846.52h7.62M1501.70 846.52h1.90M1504.56 846.52h2.86M1508.37 846.52h6.66M1515.98 846.52h1.90M1518.84 846.52h7.62M1476.00 894.15h2.86M1479.81 894.15h4.76M1485.52 894.15h2.86M1489.33 894.15h7.62M1497.90 894.15h4.76M1503.61 894.15h3.81M1508.37 894.15h1.90M1511.22 894.15h8.57M1476.00 896.05h2.86M1479.81 896.05h2.86M1483.62 896.05h5.71M1490.28 896.05h8.57M1499.80 896.05h3.81M1504.56 896.05h5.71M1511.22 896.05h8.57M1476.00 897.96h2.86M1483.62 897.96h8.57M1493.14 897.96h7.62M1501.70 897.96h1.90M1504.56 897.96h2.86M1508.37 897.96h6.66M1515.98 897.96h1.90M1518.84 897.96h7.62"/><path stroke="#0000ff" d="M1476.00 101.67h4.76M1497.90 101.67h6.66M1476.00 109.29h8.57M1476.00 113.09h10.47M1499.80 113.09h5.71M1511.22 113.09h1.90M1541.69 113.09h1.90M1557.87 113.09h1.90M1483.62 130.24h6.66M1476.00 151.19h10.47M1504.56 151.19h1.90M1522.65 151.19h1.90M1547.40 151.19h1.90M1558.82 151.19h1.90M1477.90 155.00h14.28M1476.00 162.62h10.47M1499.80 162.62h1.90M1528.36 162.62h1.90M1545.50 162.62h1.90M1569.30 162.62h1.90M1490.28 212.15h6.66M1479.81 215.96h14.28M1476.00 236.92h10.47M1504.56 236.92h1.90M1535.98 236.92h1.90M1476.00 290.26h10.47M1501.70 290.26h1.90M1476.00 301.69h10.47M1497.90 301.69h1.90M1476.00 324.55h10.47M1497.90 324.55h1.90M1515.98 324.55h1.90M1490.28 337.88h6.66M1493.14 341.69h6.66M1479.81 343.60h14.28M1479.81 347.41h14.28M1476.00 374.08h10.47M1502.66 374.08h1.90M1520.74 374.08h1.90M1490.28 387.42h6.66M1493.14 391.22h6.66M1479.81 393.13h14.28M1479.81 398.84h14.28M1476.00 423.61h10.47M1503.61 423.61h1.90M1491.23 435.04h6.66M1479.81 446.47h14.28M1476.00 467.43h10.47M1509.32 467.43h1.90M1527.41 467.43h1.90M1490.28 480.76h6.66M1493.14 484.57h6.66M1479.81 486.47h14.28M1479.81 496.00h14.28M1476.00 522.67h10.47M1515.98 522.67h1.90M1527.41 522.67h1.90M1491.23 534.10h6.66M1479.81 545.53h14.28M1476.00 566.49h10.47M1515.98 566.49h1.90M1527.41 566.49h1.90M1491.23 577.92h6.66M1479.81 589.35h14.28M1476.00 612.21h10.47M1517.89 612.21h1.90M1529.31 612.21h1.90M1491.23 623.64h6.66M1479.81 635.07h14.28M1476.00 657.93h10.47M1508.37 657.93h1.90M1520.74 657.93h1.90M1488.38 676.98h6.66M1476.00 703.65h10.47M1502.66 703.65h1.90M1520.74 703.65h1.90M1541.69 703.65h1.90M1558.82 703.65h1.90M1577.86 703.65h1.90M1488.38 726.51h6.66M1476.00 753.18h10.47M1505.51 753.18h1.90M1523.60 753.18h1.90M1490.28 766.51h6.66M1493.14 770.32h6.66M1479.81 772.23h14.28M1479.81 776.04h14.28M1476.00 802.71h10.47M1502.66 802.71h1.90M1514.08 802.71h1.90M1491.23 814.14h6.66M1479.81 825.57h14.28M1476.00 848.43h10.47M1505.51 848.43h1.90M1521.70 848.43h1.90M1539.78 848.43h1.90M1490.28 861.76h6.66M1493.14 865.57h6.66M1479.81 867.48h14.28M1479.81 877.00h14.28M1476.00 899.86h10.47M1505.51 899.86h1.90M1516.94 899.86h1.90M1491.23 911.29h6.66"/><path stroke="#267f99" d="M1481.71 101.67h15.23M1505.51 101.67h9.52M1514.08 113.09h17.14M1544.54 113.09h7.62M1560.73 113.09h7.62M1491.23 130.24h17.14M1507.42 151.19h6.66M1525.50 151.19h12.38M1550.26 151.19h6.66M1561.68 151.19h6.66M1502.66 162.62h19.04M1531.22 162.62h6.66M1548.35 162.62h6.66M1572.15 162.62h6.66M1497.90 212.15h10.47M1507.42 236.92h26.66M1538.83 236.92h13.33M1504.56 290.26h13.33M1500.75 301.69h13.33M1500.75 324.55h13.33M1518.84 324.55h13.33M1497.90 337.88h13.33M1500.75 341.69h19.99M1505.51 374.08h13.33M1523.60 374.08h13.33M1497.90 387.42h13.33M1500.75 391.22h19.99M1506.46 423.61h13.33M1498.85 435.04h19.99M1512.18 467.43h13.33M1530.26 467.43h13.33M1497.90 480.76h13.33M1500.75 484.57h19.99M1518.84 522.67h6.66M1530.26 522.67h13.33M1498.85 534.10h19.99M1518.84 566.49h6.66M1530.26 566.49h13.33M1498.85 577.92h19.99M1520.74 612.21h6.66M1532.17 612.21h13.33M1498.85 623.64h19.99M1511.22 657.93h7.62M1523.60 657.93h13.33M1495.99 676.98h19.99M1505.51 703.65h6.66M1523.60 703.65h6.66M1544.54 703.65h6.66M1561.68 703.65h7.62M1580.72 703.65h5.28M1495.99 726.51h19.99M1508.37 753.18h13.33M1526.46 753.18h13.33M1497.90 766.51h13.33M1500.75 770.32h19.99M1505.51 802.71h6.66M1516.94 802.71h13.33M1498.85 814.14h19.99M1508.37 848.43h6.66M1524.55 848.43h13.33M1542.64 848.43h13.33M1497.90 861.76h13.33M1500.75 865.57h19.99M1508.37 899.86h6.66M1519.79 899.86h13.33M1498.85 911.29h19.99"/><path stroke="#000000" d="M1515.98 101.67h0.95M1517.89 101.67h13.33M1532.17 101.67h0.95M1476.00 103.57h0.95M1507.42 109.29h0.95M1510.27 109.29h0.95M1498.85 113.09h0.95M1531.22 113.09h0.95M1553.11 113.09h0.95M1555.97 113.09h0.95M1476.00 115.00h0.95M1487.42 118.81h0.95M1495.04 118.81h0.95M1503.61 118.81h0.95M1513.13 118.81h0.95M1533.12 118.81h1.90M1538.83 118.81h0.95M1541.69 118.81h0.95M1543.59 118.81h1.90M1486.47 120.72h0.95M1490.28 120.72h0.95M1500.75 120.72h0.95M1477.90 124.53h0.95M1481.71 128.33h0.95M1482.66 130.24h0.95M1490.28 130.24h0.95M1508.37 130.24h1.90M1522.65 130.24h0.95M1528.36 130.24h0.95M1530.26 130.24h0.95M1535.02 130.24h0.95M1536.93 130.24h0.95M1479.81 134.05h0.95M1489.33 135.95h0.95M1477.90 139.76h0.95M1483.62 141.67h0.95M1486.47 141.67h0.95M1488.38 141.67h0.95M1477.90 143.57h0.95M1476.00 147.38h0.95M1498.85 151.19h0.95M1514.08 151.19h0.95M1537.88 151.19h0.95M1556.92 151.19h0.95M1476.00 153.10h0.95M1492.18 155.00h0.95M1498.85 155.00h0.95M1517.89 155.00h1.90M1525.50 155.00h0.95M1527.41 155.00h0.95M1535.02 155.00h1.90M1489.33 156.91h0.95M1495.99 156.91h0.95M1504.56 156.91h0.95M1513.13 156.91h0.95M1476.00 158.81h0.95M1495.99 162.62h0.95M1521.70 162.62h0.95M1537.88 162.62h0.95M1555.97 162.62h0.95M1559.78 162.62h0.95M1578.82 162.62h0.95M1476.00 164.53h0.95M1482.66 166.44h0.95M1491.23 166.44h1.90M1496.94 166.44h0.95M1482.66 168.34h1.90M1497.90 168.34h0.95M1501.70 168.34h0.95M1486.47 170.25h0.95M1489.33 172.15h0.95M1491.23 172.15h0.95M1489.33 174.06h0.95M1491.23 174.06h0.95M1485.52 175.96h0.95M1488.38 175.96h0.95M1496.94 175.96h0.95M1483.62 177.87h0.95M1481.71 179.77h0.95M1479.81 181.67h0.95M1477.90 183.58h0.95M1487.42 187.39h0.95M1493.14 187.39h0.95M1498.85 187.39h0.95M1502.66 187.39h0.95M1488.38 189.29h0.95M1494.09 189.29h0.95M1500.75 189.29h0.95M1503.61 189.29h0.95M1487.42 191.20h0.95M1495.99 191.20h0.95M1485.52 196.91h0.95M1491.23 196.91h1.90M1494.09 196.91h0.95M1489.33 198.82h0.95M1493.14 198.82h0.95M1486.47 200.72h0.95M1492.18 200.72h0.95M1495.04 200.72h0.95M1479.81 204.53h0.95M1489.33 206.44h0.95M1496.94 206.44h0.95M1487.42 208.34h0.95M1493.14 208.34h0.95M1486.47 210.25h0.95M1490.28 210.25h0.95M1488.38 212.15h0.95M1496.94 212.15h0.95M1508.37 212.15h1.90M1516.94 212.15h0.95M1519.79 212.15h0.95M1487.42 214.06h0.95M1488.38 214.06h0.95M1494.09 215.96h0.95M1498.85 215.96h0.95M1517.89 215.96h1.90M1525.50 215.96h0.95M1527.41 215.96h0.95M1535.02 215.96h1.90M1488.38 217.87h0.95M1495.04 217.87h0.95M1500.75 217.87h0.95M1487.42 219.77h0.95M1493.14 219.77h0.95M1499.80 219.77h0.95M1477.90 221.68h0.95M1487.42 225.49h0.95M1491.23 225.49h0.95M1488.38 227.39h0.95M1499.80 227.39h0.95M1505.51 227.39h0.95M1512.18 227.39h0.95M1491.23 229.30h0.95M1497.90 229.30h0.95M1507.42 229.30h0.95M1514.08 229.30h0.95M1519.79 229.30h0.95M1476.00 233.11h0.95M1500.75 236.92h0.95M1534.07 236.92h0.95M1476.00 238.82h0.95M1488.38 240.73h0.95M1490.28 240.73h1.90M1480.76 242.63h1.90M1495.99 242.63h0.95M1499.80 242.63h0.95M1482.66 246.44h0.95M1487.42 246.44h0.95M1515.03 246.44h0.95M1516.94 246.44h0.95M1490.28 248.35h0.95M1494.09 248.35h0.95M1502.66 248.35h1.90M1477.90 250.25h0.95M1486.47 252.16h0.95M1491.23 252.16h0.95M1502.66 252.16h0.95M1489.33 254.06h0.95M1496.94 254.06h0.95M1499.80 254.06h0.95M1504.56 254.06h0.95M1509.32 254.06h0.95M1512.18 254.06h0.95M1489.33 255.97h0.95M1494.09 255.97h0.95M1499.80 255.97h0.95M1501.70 255.97h0.95M1517.89 255.97h1.90M1486.47 257.88h0.95M1491.23 257.88h0.95M1500.75 257.88h0.95M1489.33 259.78h0.95M1496.94 259.78h0.95M1499.80 259.78h0.95M1504.56 259.78h0.95M1509.32 259.78h0.95M1512.18 259.78h0.95M1489.33 261.69h0.95M1494.09 261.69h0.95M1499.80 261.69h0.95M1501.70 261.69h0.95M1517.89 261.69h1.90M1486.47 263.59h0.95M1491.23 263.59h0.95M1500.75 263.59h0.95M1489.33 265.50h0.95M1496.94 265.50h0.95M1499.80 265.50h0.95M1504.56 265.50h0.95M1509.32 265.50h0.95M1512.18 265.50h0.95M1489.33 267.40h0.95M1494.09 267.40h0.95M1499.80 267.40h0.95M1501.70 267.40h0.95M1517.89 267.40h1.90M1486.47 269.31h0.95M1491.23 269.31h0.95M1505.51 269.31h0.95M1489.33 271.21h0.95M1496.94 271.21h0.95M1499.80 271.21h0.95M1504.56 271.21h0.95M1509.32 271.21h0.95M1512.18 271.21h0.95M1489.33 273.11h0.95M1494.09 273.11h0.95M1499.80 273.11h0.95M1501.70 273.11h0.95M1517.89 273.11h1.90M1477.90 275.02h0.95M1482.66 276.93h0.95M1489.33 278.83h0.95M1495.04 278.83h0.95M1496.94 278.83h0.95M1500.75 278.83h0.95M1514.08 278.83h1.90M1516.94 278.83h0.95M1477.90 280.73h0.95M1484.57 284.55h0.95M1494.09 284.55h0.95M1502.66 284.55h0.95M1476.00 286.45h0.95M1498.85 290.26h1.90M1476.00 292.17h0.95M1480.76 294.07h1.90M1495.99 294.07h0.95M1499.80 294.07h0.95M1476.00 297.88h0.95M1495.04 301.69h1.90M1476.00 303.59h0.95M1480.76 305.50h1.90M1495.99 305.50h0.95M1499.80 305.50h0.95M1482.66 309.31h0.95M1487.42 311.21h0.95M1477.90 313.12h0.95M1476.00 315.03h0.95M1492.18 324.55h0.95M1514.08 324.55h0.95M1476.00 326.45h0.95M1480.76 328.36h2.86M1495.04 328.36h1.90M1500.75 328.36h0.95M1502.66 328.36h0.95M1484.57 330.26h1.90M1497.90 330.26h1.90M1477.90 332.17h0.95M1481.71 335.98h0.95M1488.38 337.88h0.95M1496.94 337.88h0.95M1511.22 337.88h1.90M1521.70 337.88h0.95M1531.22 337.88h1.90M1536.93 337.88h0.95M1539.78 337.88h0.95M1491.23 341.69h0.95M1499.80 341.69h0.95M1520.74 341.69h1.90M1526.46 341.69h1.90M1494.09 343.60h0.95M1501.70 343.60h0.95M1513.13 343.60h0.95M1517.89 343.60h1.90M1490.28 345.50h0.95M1496.94 345.50h0.95M1502.66 345.50h0.95M1494.09 347.41h0.95M1501.70 347.41h0.95M1507.42 347.41h2.86M1486.47 349.31h1.90M1499.80 349.31h0.95M1509.32 349.31h0.95M1517.89 349.31h0.95M1528.36 349.31h0.95M1477.90 351.22h0.95M1483.62 353.12h0.95M1486.47 353.12h0.95M1488.38 353.12h0.95M1486.47 355.03h1.90M1501.70 355.03h0.95M1504.56 355.03h0.95M1477.90 356.94h0.95M1476.00 360.75h0.95M1496.94 374.08h0.95M1518.84 374.08h0.95M1476.00 375.99h0.95M1480.76 377.89h2.86M1495.04 377.89h1.90M1500.75 377.89h0.95M1502.66 377.89h0.95M1484.57 379.80h1.90M1497.90 379.80h1.90M1477.90 381.70h0.95M1481.71 385.51h0.95M1488.38 387.42h0.95M1496.94 387.42h0.95M1511.22 387.42h1.90M1521.70 387.42h0.95M1531.22 387.42h1.90M1536.93 387.42h0.95M1539.78 387.42h0.95M1491.23 391.22h0.95M1499.80 391.22h0.95M1520.74 391.22h1.90M1526.46 391.22h1.90M1494.09 393.13h0.95M1501.70 393.13h0.95M1513.13 393.13h0.95M1517.89 393.13h1.90M1490.28 395.03h0.95M1496.94 395.03h0.95M1502.66 395.03h0.95M1490.28 396.94h0.95M1496.94 396.94h0.95M1502.66 396.94h0.95M1494.09 398.84h0.95M1501.70 398.84h0.95M1507.42 398.84h2.86M1486.47 400.75h1.90M1499.80 400.75h0.95M1509.32 400.75h0.95M1517.89 400.75h0.95M1528.36 400.75h0.95M1477.90 402.65h0.95M1483.62 404.56h0.95M1486.47 404.56h0.95M1488.38 404.56h0.95M1486.47 406.46h1.90M1501.70 406.46h0.95M1504.56 406.46h0.95M1477.90 408.37h0.95M1476.00 412.18h0.95M1500.75 423.61h0.95M1501.70 423.61h0.95M1476.00 425.51h0.95M1480.76 427.42h2.86M1495.04 427.42h1.90M1500.75 427.42h0.95M1502.66 427.42h0.95M1503.61 427.42h0.95M1505.51 427.42h0.95M1484.57 429.32h1.90M1497.90 429.32h1.90M1477.90 431.23h0.95M1489.33 435.04h0.95M1497.90 435.04h0.95M1518.84 435.04h1.90M1528.36 435.04h0.95M1533.12 435.04h0.95M1536.93 435.04h0.95M1480.76 436.94h0.95M1489.33 436.94h0.95M1484.57 438.85h1.90M1494.09 438.85h1.90M1477.90 440.75h0.95M1481.71 444.56h0.95M1494.09 446.47h0.95M1501.70 446.47h0.95M1511.22 446.47h0.95M1518.84 446.47h0.95M1522.65 446.47h3.81M1477.90 448.38h0.95M1483.62 450.28h0.95M1486.47 450.28h0.95M1488.38 450.28h0.95M1486.47 452.19h1.90M1501.70 452.19h0.95M1504.56 452.19h0.95M1477.90 454.09h0.95M1484.57 457.90h1.90M1497.90 457.90h0.95M1507.42 457.90h0.95M1513.13 457.90h0.95M1523.60 457.90h0.95M1476.00 459.81h0.95M1503.61 467.43h0.95M1525.50 467.43h0.95M1476.00 469.33h0.95M1480.76 471.24h2.86M1495.04 471.24h1.90M1500.75 471.24h0.95M1502.66 471.24h0.95M1484.57 473.14h1.90M1497.90 473.14h1.90M1477.90 475.05h0.95M1481.71 478.86h0.95M1488.38 480.76h0.95M1496.94 480.76h0.95M1511.22 480.76h1.90M1521.70 480.76h0.95M1531.22 480.76h1.90M1536.93 480.76h0.95M1539.78 480.76h0.95M1491.23 484.57h0.95M1499.80 484.57h0.95M1520.74 484.57h1.90M1526.46 484.57h1.90M1494.09 486.47h0.95M1501.70 486.47h0.95M1513.13 486.47h0.95M1517.89 486.47h1.90M1490.28 488.38h0.95M1496.94 488.38h0.95M1502.66 488.38h0.95M1490.28 490.28h0.95M1496.94 490.28h0.95M1502.66 490.28h0.95M1490.28 492.19h0.95M1495.99 492.19h0.95M1501.70 492.19h0.95M1490.28 494.09h0.95M1496.94 494.09h0.95M1502.66 494.09h0.95M1494.09 496.00h0.95M1501.70 496.00h0.95M1507.42 496.00h2.86M1486.47 497.90h1.90M1499.80 497.90h0.95M1509.32 497.90h0.95M1517.89 497.90h0.95M1528.36 497.90h0.95M1477.90 499.81h0.95M1483.62 501.71h0.95M1486.47 501.71h0.95M1488.38 501.71h0.95M1486.47 503.62h1.90M1501.70 503.62h0.95M1504.56 503.62h0.95M1477.90 505.52h0.95M1476.00 509.33h0.95M1506.46 522.67h0.95M1525.50 522.67h0.95M1476.00 524.58h0.95M1480.76 526.48h2.86M1495.04 526.48h1.90M1500.75 526.48h0.95M1502.66 526.48h0.95M1503.61 526.48h0.95M1505.51 526.48h0.95M1484.57 528.38h1.90M1497.90 528.38h1.90M1477.90 530.29h0.95M1489.33 534.10h0.95M1497.90 534.10h0.95M1518.84 534.10h1.90M1528.36 534.10h0.95M1533.12 534.10h0.95M1536.93 534.10h0.95M1480.76 536.01h0.95M1489.33 536.01h0.95M1484.57 537.91h1.90M1494.09 537.91h1.90M1477.90 539.82h0.95M1481.71 543.62h0.95M1494.09 545.53h0.95M1501.70 545.53h0.95M1511.22 545.53h0.95M1518.84 545.53h0.95M1522.65 545.53h3.81M1477.90 547.44h0.95M1483.62 549.34h0.95M1486.47 549.34h0.95M1488.38 549.34h0.95M1486.47 551.25h1.90M1501.70 551.25h0.95M1504.56 551.25h0.95M1477.90 553.15h0.95M1484.57 556.96h1.90M1497.90 556.96h0.95M1507.42 556.96h0.95M1513.13 556.96h0.95M1523.60 556.96h0.95M1476.00 558.87h0.95M1506.46 566.49h0.95M1525.50 566.49h0.95M1476.00 568.39h0.95M1480.76 570.30h2.86M1495.04 570.30h1.90M1500.75 570.30h0.95M1502.66 570.30h0.95M1503.61 570.30h0.95M1505.51 570.30h0.95M1484.57 572.20h1.90M1497.90 572.20h1.90M1477.90 574.11h0.95M1489.33 577.92h0.95M1497.90 577.92h0.95M1518.84 577.92h1.90M1528.36 577.92h0.95M1533.12 577.92h0.95M1536.93 577.92h0.95M1480.76 579.82h0.95M1489.33 579.82h0.95M1484.57 581.73h1.90M1494.09 581.73h1.90M1477.90 583.63h0.95M1481.71 587.44h0.95M1494.09 589.35h0.95M1501.70 589.35h0.95M1511.22 589.35h0.95M1518.84 589.35h0.95M1522.65 589.35h3.81M1477.90 591.25h0.95M1483.62 593.15h0.95M1486.47 593.15h0.95M1488.38 593.15h0.95M1486.47 595.06h1.90M1501.70 595.06h0.95M1504.56 595.06h0.95M1477.90 596.97h0.95M1484.57 600.78h1.90M1497.90 600.78h0.95M1507.42 600.78h0.95M1513.13 600.78h0.95M1523.60 600.78h0.95M1476.00 602.68h0.95M1508.37 612.21h0.95M1527.41 612.21h0.95M1476.00 614.11h0.95M1480.76 616.02h2.86M1495.04 616.02h1.90M1500.75 616.02h0.95M1502.66 616.02h0.95M1503.61 616.02h0.95M1505.51 616.02h0.95M1484.57 617.92h1.90M1497.90 617.92h1.90M1477.90 619.83h0.95M1489.33 623.64h0.95M1497.90 623.64h0.95M1518.84 623.64h1.90M1528.36 623.64h0.95M1533.12 623.64h0.95M1536.93 623.64h0.95M1480.76 625.54h0.95M1489.33 625.54h0.95M1484.57 627.45h1.90M1494.09 627.45h1.90M1477.90 629.35h0.95M1481.71 633.16h0.95M1494.09 635.07h0.95M1501.70 635.07h0.95M1511.22 635.07h0.95M1518.84 635.07h0.95M1522.65 635.07h3.81M1477.90 636.97h0.95M1483.62 638.88h0.95M1486.47 638.88h0.95M1488.38 638.88h0.95M1486.47 640.78h1.90M1501.70 640.78h0.95M1504.56 640.78h0.95M1477.90 642.69h0.95M1484.57 646.50h1.90M1497.90 646.50h0.95M1507.42 646.50h0.95M1513.13 646.50h0.95M1523.60 646.50h0.95M1476.00 648.40h0.95M1501.70 657.93h0.95M1518.84 657.93h0.95M1476.00 659.83h0.95M1487.42 661.74h0.95M1493.14 661.74h0.95M1498.85 661.74h0.95M1502.66 661.74h0.95M1488.38 663.64h0.95M1494.09 663.64h0.95M1500.75 663.64h0.95M1504.56 663.64h0.95M1480.76 667.45h2.86M1495.04 667.45h1.90M1500.75 667.45h0.95M1502.66 667.45h0.95M1484.57 669.36h1.90M1497.90 669.36h1.90M1477.90 671.26h0.95M1481.71 675.07h0.95M1486.47 676.98h0.95M1495.04 676.98h0.95M1515.98 676.98h1.90M1523.60 676.98h0.95M1527.41 676.98h0.95M1535.02 676.98h0.95M1545.50 676.98h0.95M1486.47 678.88h1.90M1496.94 678.88h0.95M1499.80 678.88h0.95M1511.22 678.88h0.95M1535.02 678.88h0.95M1545.50 678.88h0.95M1552.16 678.88h0.95M1559.78 678.88h0.95M1477.90 680.79h0.95M1483.62 682.69h0.95M1486.47 682.69h0.95M1488.38 682.69h0.95M1486.47 684.60h1.90M1501.70 684.60h0.95M1504.56 684.60h0.95M1477.90 686.50h0.95M1476.00 690.31h0.95M1497.90 703.65h0.95M1512.18 703.65h0.95M1530.26 703.65h0.95M1551.21 703.65h0.95M1569.30 703.65h0.95M1476.00 705.55h0.95M1487.42 707.46h0.95M1493.14 707.46h0.95M1498.85 707.46h0.95M1502.66 707.46h0.95M1488.38 709.36h0.95M1494.09 709.36h0.95M1500.75 709.36h0.95M1504.56 709.36h0.95M1485.52 711.27h0.95M1491.23 711.27h0.95M1495.04 711.27h0.95M1498.85 711.27h0.95M1488.38 713.17h0.95M1494.09 713.17h0.95M1500.75 713.17h0.95M1504.56 713.17h0.95M1480.76 716.98h2.86M1495.04 716.98h1.90M1500.75 716.98h0.95M1502.66 716.98h0.95M1503.61 716.98h0.95M1505.51 716.98h0.95M1484.57 718.89h1.90M1497.90 718.89h1.90M1477.90 720.79h0.95M1481.71 724.60h0.95M1486.47 726.51h0.95M1495.04 726.51h0.95M1515.98 726.51h1.90M1523.60 726.51h0.95M1527.41 726.51h0.95M1535.02 726.51h0.95M1545.50 726.51h0.95M1486.47 728.41h1.90M1496.94 728.41h0.95M1499.80 728.41h0.95M1511.22 728.41h0.95M1535.02 728.41h0.95M1545.50 728.41h0.95M1552.16 728.41h0.95M1559.78 728.41h0.95M1477.90 730.32h0.95M1483.62 732.22h0.95M1486.47 732.22h0.95M1488.38 732.22h0.95M1486.47 734.12h1.90M1501.70 734.12h0.95M1504.56 734.12h0.95M1477.90 736.03h0.95M1476.00 739.84h0.95M1499.80 753.18h0.95M1521.70 753.18h0.95M1476.00 755.08h0.95M1480.76 756.99h2.86M1495.04 756.99h1.90M1500.75 756.99h0.95M1502.66 756.99h0.95M1484.57 758.89h1.90M1497.90 758.89h1.90M1477.90 760.80h0.95M1481.71 764.61h0.95M1488.38 766.51h0.95M1496.94 766.51h0.95M1511.22 766.51h1.90M1521.70 766.51h0.95M1531.22 766.51h1.90M1536.93 766.51h0.95M1539.78 766.51h0.95M1491.23 770.32h0.95M1499.80 770.32h0.95M1520.74 770.32h1.90M1526.46 770.32h1.90M1494.09 772.23h0.95M1501.70 772.23h0.95M1513.13 772.23h0.95M1517.89 772.23h1.90M1490.28 774.13h0.95M1496.94 774.13h0.95M1502.66 774.13h0.95M1494.09 776.04h0.95M1501.70 776.04h0.95M1507.42 776.04h2.86M1486.47 777.94h1.90M1499.80 777.94h0.95M1509.32 777.94h0.95M1517.89 777.94h0.95M1528.36 777.94h0.95M1477.90 779.85h0.95M1483.62 781.75h0.95M1486.47 781.75h0.95M1488.38 781.75h0.95M1486.47 783.66h1.90M1501.70 783.66h0.95M1504.56 783.66h0.95M1477.90 785.56h0.95M1476.00 789.37h0.95M1496.94 802.71h0.95M1512.18 802.71h0.95M1476.00 804.61h0.95M1480.76 806.52h2.86M1495.04 806.52h1.90M1500.75 806.52h0.95M1502.66 806.52h0.95M1503.61 806.52h0.95M1505.51 806.52h0.95M1484.57 808.42h1.90M1497.90 808.42h1.90M1477.90 810.33h0.95M1489.33 814.14h0.95M1497.90 814.14h0.95M1518.84 814.14h1.90M1528.36 814.14h0.95M1533.12 814.14h0.95M1536.93 814.14h0.95M1480.76 816.04h0.95M1489.33 816.04h0.95M1484.57 817.95h1.90M1494.09 817.95h1.90M1477.90 819.85h0.95M1481.71 823.66h0.95M1494.09 825.57h0.95M1501.70 825.57h0.95M1511.22 825.57h0.95M1518.84 825.57h0.95M1522.65 825.57h3.81M1477.90 827.47h0.95M1483.62 829.38h0.95M1486.47 829.38h0.95M1488.38 829.38h0.95M1486.47 831.28h1.90M1501.70 831.28h0.95M1504.56 831.28h0.95M1477.90 833.19h0.95M1484.57 837.00h1.90M1497.90 837.00h0.95M1507.42 837.00h0.95M1513.13 837.00h0.95M1523.60 837.00h0.95M1476.00 838.90h0.95M1499.80 848.43h0.95M1515.03 848.43h0.95M1537.88 848.43h0.95M1476.00 850.33h0.95M1480.76 852.24h2.86M1495.04 852.24h1.90M1500.75 852.24h0.95M1502.66 852.24h0.95M1484.57 854.14h1.90M1497.90 854.14h1.90M1477.90 856.05h0.95M1481.71 859.86h0.95M1488.38 861.76h0.95M1496.94 861.76h0.95M1511.22 861.76h1.90M1521.70 861.76h0.95M1531.22 861.76h1.90M1536.93 861.76h0.95M1539.78 861.76h0.95M1491.23 865.57h0.95M1499.80 865.57h0.95M1520.74 865.57h1.90M1526.46 865.57h1.90M1494.09 867.48h0.95M1501.70 867.48h0.95M1513.13 867.48h0.95M1517.89 867.48h1.90M1490.28 869.38h0.95M1497.90 869.38h0.95M1503.61 869.38h0.95M1490.28 871.29h0.95M1497.90 871.29h0.95M1503.61 871.29h0.95M1490.28 873.19h0.95M1495.99 873.19h0.95M1501.70 873.19h0.95M1490.28 875.10h0.95M1495.99 875.10h0.95M1501.70 875.10h0.95M1494.09 877.00h0.95M1501.70 877.00h0.95M1507.42 877.00h2.86M1486.47 878.91h1.90M1499.80 878.91h0.95M1509.32 878.91h0.95M1517.89 878.91h0.95M1528.36 878.91h0.95M1477.90 880.81h0.95M1483.62 882.72h0.95M1486.47 882.72h0.95M1488.38 882.72h0.95M1486.47 884.62h1.90M1501.70 884.62h0.95M1504.56 884.62h0.95M1477.90 886.53h0.95M1476.00 890.34h0.95M1499.80 899.86h0.95M1515.03 899.86h0.95M1476.00 901.77h0.95M1480.76 903.67h2.86M1495.04 903.67h1.90M1500.75 903.67h0.95M1502.66 903.67h0.95M1484.57 905.58h1.90M1497.90 905.58h1.90M1477.90 907.48h0.95M1489.33 911.29h0.95M1497.90 911.29h0.95M1518.84 911.29h1.90M1528.36 911.29h0.95M1533.12 911.29h0.95M1536.93 911.29h0.95M1480.76 913.20h0.95M1489.33 913.20h0.95M1484.57 915.10h1.90M1494.09 915.10h1.90M1477.90 917.01h0.95M1481.71 920.82h0.95"/><path stroke="#e50000" d="M1485.52 109.29h20.94M1482.66 116.91h4.76M1495.99 118.81h7.62M1504.56 118.81h8.57M1510.27 130.24h12.38M1531.22 130.24h3.81M1483.62 135.95h4.76M1499.80 155.00h18.09M1519.79 155.00h5.71M1528.36 155.00h6.66M1483.62 166.44h7.62M1484.57 168.34h13.33M1489.33 175.96h7.62M1486.47 196.91h4.76M1487.42 200.72h4.76M1491.23 210.25h1.90M1510.27 212.15h6.66M1499.80 215.96h18.09M1519.79 215.96h5.71M1528.36 215.96h6.66M1488.38 219.77h4.76M1492.18 225.49h8.57M1482.66 242.63h13.33M1483.62 246.44h3.81M1495.04 248.35h7.62M1487.42 252.16h3.81M1500.75 254.06h3.81M1490.28 255.97h3.81M1487.42 257.88h3.81M1500.75 259.78h3.81M1490.28 261.69h3.81M1487.42 263.59h3.81M1500.75 265.50h3.81M1490.28 267.40h3.81M1487.42 269.31h3.81M1500.75 271.21h3.81M1490.28 273.11h3.81M1490.28 278.83h3.81M1501.70 278.83h12.38M1482.66 294.07h13.33M1482.66 305.50h13.33M1483.62 328.36h11.42M1486.47 330.26h11.42M1513.13 337.88h8.57M1522.65 341.69h3.81M1502.66 343.60h10.47M1491.23 345.50h4.76M1503.61 345.50h4.76M1502.66 347.41h4.76M1488.38 349.31h11.42M1488.38 355.03h13.33M1483.62 377.89h11.42M1486.47 379.80h11.42M1513.13 387.42h8.57M1522.65 391.22h3.81M1502.66 393.13h10.47M1491.23 395.03h4.76M1503.61 395.03h4.76M1491.23 396.94h4.76M1503.61 396.94h4.76M1502.66 398.84h4.76M1488.38 400.75h11.42M1488.38 406.46h13.33M1483.62 427.42h11.42M1486.47 429.32h11.42M1520.74 435.04h7.62M1486.47 438.85h7.62M1502.66 446.47h8.57M1519.79 446.47h2.86M1488.38 452.19h13.33M1486.47 457.90h11.42M1483.62 471.24h11.42M1486.47 473.14h11.42M1513.13 480.76h8.57M1522.65 484.57h3.81M1502.66 486.47h10.47M1491.23 488.38h4.76M1503.61 488.38h4.76M1491.23 490.28h4.76M1503.61 490.28h4.76M1491.23 492.19h3.81M1502.66 492.19h4.76M1491.23 494.09h4.76M1503.61 494.09h4.76M1502.66 496.00h4.76M1488.38 497.90h11.42M1488.38 503.62h13.33M1483.62 526.48h11.42M1486.47 528.38h11.42M1520.74 534.10h7.62M1486.47 537.91h7.62M1502.66 545.53h8.57M1519.79 545.53h2.86M1488.38 551.25h13.33M1486.47 556.96h11.42M1483.62 570.30h11.42M1486.47 572.20h11.42M1520.74 577.92h7.62M1486.47 581.73h7.62M1502.66 589.35h8.57M1519.79 589.35h2.86M1488.38 595.06h13.33M1486.47 600.78h11.42M1483.62 616.02h11.42M1486.47 617.92h11.42M1520.74 623.64h7.62M1486.47 627.45h7.62M1502.66 635.07h8.57M1519.79 635.07h2.86M1488.38 640.78h13.33M1486.47 646.50h11.42M1483.62 667.45h11.42M1486.47 669.36h11.42M1517.89 676.98h5.71M1488.38 678.88h8.57M1488.38 684.60h13.33M1483.62 716.98h11.42M1486.47 718.89h11.42M1517.89 726.51h5.71M1488.38 728.41h8.57M1488.38 734.12h13.33M1483.62 756.99h11.42M1486.47 758.89h11.42M1513.13 766.51h8.57M1522.65 770.32h3.81M1502.66 772.23h10.47M1491.23 774.13h4.76M1503.61 774.13h4.76M1502.66 776.04h4.76M1488.38 777.94h11.42M1488.38 783.66h13.33M1483.62 806.52h11.42M1486.47 808.42h11.42M1520.74 814.14h7.62M1486.47 817.95h7.62M1502.66 825.57h8.57M1519.79 825.57h2.86M1488.38 831.28h13.33M1486.47 837.00h11.42M1483.62 852.24h11.42M1486.47 854.14h11.42M1513.13 861.76h8.57M1522.65 865.57h3.81M1502.66 867.48h10.47M1491.23 869.38h5.71M1504.56 869.38h4.76M1491.23 871.29h5.71M1504.56 871.29h4.76M1491.23 873.19h3.81M1502.66 873.19h4.76M1491.23 875.10h3.81M1502.66 875.10h4.76M1502.66 877.00h4.76M1488.38 878.91h11.42M1488.38 884.62h13.33M1483.62 903.67h11.42M1486.47 905.58h11.42M1520.74 911.29h7.62M1486.47 915.10h7.62"/><path stroke="#098658" d="M1509.32 109.29h0.95M1555.02 113.09h0.95M1540.74 118.81h0.95M1486.47 122.62h0.95M1488.38 132.14h0.95M1486.47 137.86h0.95M1484.57 145.48h0.95M1498.85 168.34h2.86M1500.75 187.39h1.90M1502.66 189.29h0.95M1491.23 198.82h0.95M1498.85 206.44h0.95M1494.09 208.34h0.95M1496.94 242.63h2.86M1511.22 254.06h0.95M1511.22 259.78h0.95M1511.22 265.50h0.95M1511.22 271.21h0.95M1496.94 294.07h2.86M1496.94 305.50h2.86M1489.33 311.21h2.86M1538.83 337.88h0.95M1538.83 387.42h0.95M1535.02 435.04h1.90M1538.83 480.76h0.95M1535.02 534.10h1.90M1535.02 577.92h1.90M1535.02 623.64h1.90M1538.83 766.51h0.95M1535.02 814.14h1.90M1538.83 861.76h0.95M1535.02 911.29h1.90"/><path stroke="#795e26" d="M1487.42 113.09h11.42M1489.33 118.81h5.71M1487.42 151.19h11.42M1487.42 162.62h8.57M1489.33 187.39h3.81M1490.28 189.29h3.81M1490.28 227.39h9.52M1487.42 236.92h13.33M1491.23 254.06h5.71M1491.23 259.78h5.71M1491.23 265.50h5.71M1491.23 271.21h5.71M1487.42 290.26h11.42M1487.42 301.69h7.62M1487.42 324.55h4.76M1487.42 374.08h9.52M1487.42 423.61h13.33M1487.42 467.43h16.18M1487.42 522.67h19.04M1487.42 566.49h19.04M1487.42 612.21h20.94M1487.42 657.93h14.28M1489.33 661.74h3.81M1490.28 663.64h3.81M1487.42 703.65h10.47M1489.33 707.46h3.81M1490.28 709.36h3.81M1487.42 711.27h3.81M1490.28 713.17h3.81M1487.42 753.18h12.38M1487.42 802.71h9.52M1487.42 848.43h12.38M1487.42 899.86h12.38"/><path stroke="#001080" d="M1506.46 113.09h3.81M1533.12 113.09h7.62M1481.71 118.81h4.76M1480.76 120.72h4.76M1492.18 120.72h7.62M1523.60 130.24h4.76M1491.23 135.95h3.81M1484.57 141.67h1.90M1499.80 151.19h3.81M1515.98 151.19h5.71M1539.78 151.19h6.66M1493.14 155.00h5.71M1491.23 156.91h3.81M1506.46 156.91h5.71M1496.94 162.62h1.90M1523.60 162.62h3.81M1539.78 162.62h4.76M1561.68 162.62h6.66M1580.72 162.62h4.76M1480.76 166.44h1.90M1486.47 175.96h1.90M1481.71 187.39h4.76M1494.09 187.39h4.76M1481.71 189.29h5.71M1495.04 189.29h5.71M1481.71 191.20h4.76M1489.33 191.20h5.71M1497.90 191.20h4.76M1483.62 196.91h1.90M1482.66 198.82h5.71M1484.57 200.72h1.90M1493.14 200.72h1.90M1483.62 206.44h4.76M1491.23 206.44h4.76M1488.38 208.34h4.76M1483.62 210.25h1.90M1488.38 210.25h1.90M1483.62 212.15h3.81M1517.89 212.15h1.90M1489.33 214.06h3.81M1495.04 215.96h3.81M1483.62 217.87h3.81M1490.28 217.87h3.81M1502.66 217.87h5.71M1482.66 219.77h4.76M1494.09 219.77h5.71M1481.71 225.49h4.76M1489.33 225.49h1.90M1481.71 227.39h5.71M1500.75 227.39h4.76M1507.42 227.39h4.76M1493.14 229.30h3.81M1509.32 229.30h3.81M1521.70 229.30h4.76M1482.66 231.20h5.71M1501.70 236.92h1.90M1481.71 240.73h5.71M1480.76 246.44h1.90M1483.62 248.35h5.71M1492.18 248.35h1.90M1484.57 252.16h1.90M1483.62 254.06h4.76M1497.90 254.06h1.90M1483.62 255.97h5.71M1495.04 255.97h4.76M1484.57 257.88h1.90M1483.62 259.78h4.76M1497.90 259.78h1.90M1483.62 261.69h5.71M1495.04 261.69h4.76M1484.57 263.59h1.90M1483.62 265.50h4.76M1497.90 265.50h1.90M1483.62 267.40h5.71M1495.04 267.40h4.76M1484.57 269.31h1.90M1483.62 271.21h4.76M1497.90 271.21h1.90M1483.62 273.11h5.71M1495.04 273.11h4.76M1483.62 278.83h5.71M1498.85 278.83h1.90M1495.99 284.55h5.71M1493.14 324.55h3.81M1496.94 328.36h3.81M1483.62 337.88h3.81M1533.12 337.88h3.81M1483.62 341.69h6.66M1495.04 343.60h6.66M1514.08 343.60h3.81M1483.62 345.50h6.66M1498.85 345.50h3.81M1495.04 347.41h6.66M1511.22 349.31h6.66M1484.57 353.12h1.90M1502.66 355.03h1.90M1497.90 374.08h3.81M1496.94 377.89h3.81M1483.62 387.42h3.81M1533.12 387.42h3.81M1483.62 391.22h6.66M1495.04 393.13h6.66M1514.08 393.13h3.81M1483.62 395.03h6.66M1498.85 395.03h3.81M1483.62 396.94h6.66M1498.85 396.94h3.81M1495.04 398.84h6.66M1511.22 400.75h6.66M1484.57 404.56h1.90M1502.66 406.46h1.90M1496.94 427.42h3.81M1481.71 435.04h6.66M1529.31 435.04h3.81M1481.71 436.94h6.66M1495.04 446.47h6.66M1512.18 446.47h6.66M1484.57 450.28h1.90M1502.66 452.19h1.90M1509.32 457.90h3.81M1504.56 467.43h3.81M1496.94 471.24h3.81M1483.62 480.76h3.81M1533.12 480.76h3.81M1483.62 484.57h6.66M1495.04 486.47h6.66M1514.08 486.47h3.81M1483.62 488.38h6.66M1498.85 488.38h3.81M1483.62 490.28h6.66M1498.85 490.28h3.81M1483.62 492.19h6.66M1497.90 492.19h3.81M1483.62 494.09h6.66M1498.85 494.09h3.81M1495.04 496.00h6.66M1511.22 497.90h6.66M1484.57 501.71h1.90M1502.66 503.62h1.90M1507.42 522.67h7.62M1496.94 526.48h3.81M1481.71 534.10h6.66M1529.31 534.10h3.81M1481.71 536.01h6.66M1495.04 545.53h6.66M1512.18 545.53h6.66M1484.57 549.34h1.90M1502.66 551.25h1.90M1509.32 556.96h3.81M1507.42 566.49h7.62M1496.94 570.30h3.81M1481.71 577.92h6.66M1529.31 577.92h3.81M1481.71 579.82h6.66M1495.04 589.35h6.66M1512.18 589.35h6.66M1484.57 593.15h1.90M1502.66 595.06h1.90M1509.32 600.78h3.81M1509.32 612.21h7.62M1496.94 616.02h3.81M1481.71 623.64h6.66M1529.31 623.64h3.81M1481.71 625.54h6.66M1495.04 635.07h6.66M1512.18 635.07h6.66M1484.57 638.88h1.90M1502.66 640.78h1.90M1509.32 646.50h3.81M1502.66 657.93h4.76M1481.71 661.74h4.76M1494.09 661.74h4.76M1481.71 663.64h5.71M1495.04 663.64h5.71M1496.94 667.45h3.81M1483.62 676.98h1.90M1524.55 676.98h2.86M1529.31 676.98h5.71M1536.93 676.98h8.57M1497.90 678.88h1.90M1547.40 678.88h4.76M1554.06 678.88h5.71M1484.57 682.69h1.90M1502.66 684.60h1.90M1498.85 703.65h2.86M1514.08 703.65h5.71M1532.17 703.65h8.57M1553.11 703.65h4.76M1571.20 703.65h5.71M1481.71 707.46h4.76M1494.09 707.46h4.76M1481.71 709.36h5.71M1495.04 709.36h5.71M1481.71 711.27h2.86M1492.18 711.27h2.86M1481.71 713.17h5.71M1495.04 713.17h5.71M1496.94 716.98h3.81M1483.62 726.51h1.90M1524.55 726.51h2.86M1529.31 726.51h5.71M1536.93 726.51h8.57M1497.90 728.41h1.90M1547.40 728.41h4.76M1554.06 728.41h5.71M1484.57 732.22h1.90M1502.66 734.12h1.90M1500.75 753.18h3.81M1496.94 756.99h3.81M1483.62 766.51h3.81M1533.12 766.51h3.81M1483.62 770.32h6.66M1495.04 772.23h6.66M1514.08 772.23h3.81M1483.62 774.13h6.66M1498.85 774.13h3.81M1495.04 776.04h6.66M1511.22 777.94h6.66M1484.57 781.75h1.90M1502.66 783.66h1.90M1497.90 802.71h3.81M1496.94 806.52h3.81M1481.71 814.14h6.66M1529.31 814.14h3.81M1481.71 816.04h6.66M1495.04 825.57h6.66M1512.18 825.57h6.66M1484.57 829.38h1.90M1502.66 831.28h1.90M1509.32 837.00h3.81M1500.75 848.43h3.81M1516.94 848.43h3.81M1496.94 852.24h3.81M1483.62 861.76h3.81M1533.12 861.76h3.81M1483.62 865.57h6.66M1495.04 867.48h6.66M1514.08 867.48h3.81M1483.62 869.38h6.66M1499.80 869.38h3.81M1483.62 871.29h6.66M1499.80 871.29h3.81M1483.62 873.19h6.66M1497.90 873.19h3.81M1483.62 875.10h6.66M1497.90 875.10h3.81M1495.04 877.00h6.66M1511.22 878.91h6.66M1484.57 882.72h1.90M1502.66 884.62h1.90M1500.75 899.86h3.81M1496.94 903.67h3.81M1481.71 911.29h6.66M1529.31 911.29h3.81M1481.71 913.20h6.66"/><path stroke="#af00db" d="M1477.90 116.91h3.81M1477.90 118.81h2.86M1477.90 120.72h1.90M1479.81 122.62h5.71M1477.90 128.33h2.86M1479.81 130.24h1.90M1481.71 132.14h5.71M1479.81 135.95h2.86M1479.81 137.86h5.71M1477.90 141.67h4.76M1477.90 145.48h5.71M1477.90 156.91h3.81M1477.90 166.44h1.90M1479.81 168.34h1.90M1479.81 170.25h5.71M1477.90 187.39h2.86M1477.90 189.29h2.86M1477.90 191.20h2.86M1477.90 196.91h4.76M1479.81 198.82h1.90M1481.71 200.72h1.90M1481.71 202.63h7.62M1479.81 206.44h2.86M1479.81 208.34h7.62M1479.81 210.25h2.86M1479.81 212.15h2.86M1479.81 214.06h7.62M1479.81 217.87h2.86M1479.81 219.77h1.90M1477.90 225.49h2.86M1477.90 227.39h2.86M1477.90 229.30h5.71M1477.90 231.20h3.81M1477.90 240.73h2.86M1477.90 242.63h1.90M1477.90 246.44h1.90M1479.81 248.35h2.86M1477.90 252.16h5.71M1479.81 254.06h2.86M1479.81 255.97h2.86M1477.90 257.88h5.71M1479.81 259.78h2.86M1479.81 261.69h2.86M1477.90 263.59h5.71M1479.81 265.50h2.86M1479.81 267.40h2.86M1477.90 269.31h5.71M1479.81 271.21h2.86M1479.81 273.11h2.86M1477.90 276.93h3.81M1479.81 278.83h2.86M1477.90 284.55h5.71M1477.90 294.07h1.90M1477.90 295.97h3.81M1477.90 305.50h1.90M1477.90 307.41h3.81M1477.90 309.31h3.81M1477.90 328.36h1.90M1479.81 330.26h3.81M1477.90 335.98h2.86M1479.81 337.88h2.86M1479.81 341.69h2.86M1479.81 345.50h2.86M1479.81 349.31h5.71M1477.90 353.12h4.76M1479.81 355.03h5.71M1477.90 377.89h1.90M1479.81 379.80h3.81M1477.90 385.51h2.86M1479.81 387.42h2.86M1479.81 391.22h2.86M1479.81 395.03h2.86M1479.81 396.94h2.86M1479.81 400.75h5.71M1477.90 404.56h4.76M1479.81 406.46h5.71M1477.90 427.42h1.90M1479.81 429.32h3.81M1477.90 435.04h2.86M1477.90 436.94h1.90M1479.81 438.85h3.81M1477.90 444.56h2.86M1477.90 450.28h4.76M1479.81 452.19h5.71M1477.90 457.90h5.71M1477.90 471.24h1.90M1479.81 473.14h3.81M1477.90 478.86h2.86M1479.81 480.76h2.86M1479.81 484.57h2.86M1479.81 488.38h2.86M1479.81 490.28h2.86M1479.81 492.19h2.86M1479.81 494.09h2.86M1479.81 497.90h5.71M1477.90 501.71h4.76M1479.81 503.62h5.71M1477.90 526.48h1.90M1479.81 528.38h3.81M1477.90 534.10h2.86M1477.90 536.01h1.90M1479.81 537.91h3.81M1477.90 543.62h2.86M1477.90 549.34h4.76M1479.81 551.25h5.71M1477.90 556.96h5.71M1477.90 570.30h1.90M1479.81 572.20h3.81M1477.90 577.92h2.86M1477.90 579.82h1.90M1479.81 581.73h3.81M1477.90 587.44h2.86M1477.90 593.15h4.76M1479.81 595.06h5.71M1477.90 600.78h5.71M1477.90 616.02h1.90M1479.81 617.92h3.81M1477.90 623.64h2.86M1477.90 625.54h1.90M1479.81 627.45h3.81M1477.90 633.16h2.86M1477.90 638.88h4.76M1479.81 640.78h5.71M1477.90 646.50h5.71M1477.90 661.74h2.86M1477.90 663.64h2.86M1477.90 667.45h1.90M1479.81 669.36h3.81M1477.90 675.07h2.86M1479.81 676.98h2.86M1479.81 678.88h5.71M1477.90 682.69h4.76M1479.81 684.60h5.71M1477.90 707.46h2.86M1477.90 709.36h2.86M1477.90 711.27h2.86M1477.90 713.17h2.86M1477.90 716.98h1.90M1479.81 718.89h3.81M1477.90 724.60h2.86M1479.81 726.51h2.86M1479.81 728.41h5.71M1477.90 732.22h4.76M1479.81 734.12h5.71M1477.90 756.99h1.90M1479.81 758.89h3.81M1477.90 764.61h2.86M1479.81 766.51h2.86M1479.81 770.32h2.86M1479.81 774.13h2.86M1479.81 777.94h5.71M1477.90 781.75h4.76M1479.81 783.66h5.71M1477.90 806.52h1.90M1479.81 808.42h3.81M1477.90 814.14h2.86M1477.90 816.04h1.90M1479.81 817.95h3.81M1477.90 823.66h2.86M1477.90 829.38h4.76M1479.81 831.28h5.71M1477.90 837.00h5.71M1477.90 852.24h1.90M1479.81 854.14h3.81M1477.90 859.86h2.86M1479.81 861.76h2.86M1479.81 865.57h2.86M1479.81 869.38h2.86M1479.81 871.29h2.86M1479.81 873.19h2.86M1479.81 875.10h2.86M1479.81 878.91h5.71M1477.90 882.72h4.76M1479.81 884.62h5.71M1477.90 903.67h1.90M1479.81 905.58h3.81M1477.90 911.29h2.86M1477.90 913.20h1.90M1479.81 915.10h3.81M1477.90 920.82h2.86"/><path stroke="#a31515" d="M1514.08 118.81h19.04M1535.98 118.81h0.95M1537.88 118.81h0.95M1488.38 120.72h1.90M1482.66 156.91h1.90M1485.52 156.91h2.86M1497.90 156.91h3.81M1502.66 156.91h0.95M1515.03 156.91h2.86M1557.87 162.62h1.90M1493.14 166.44h2.86M1481.71 172.15h7.62M1483.62 174.06h5.71M1496.94 217.87h2.86M1484.57 229.30h1.90M1487.42 229.30h2.86M1499.80 229.30h3.81M1504.56 229.30h1.90M1515.98 229.30h2.86M1488.38 246.44h26.66M1492.18 252.16h9.52M1506.46 254.06h2.86M1502.66 255.97h5.71M1509.32 255.97h1.90M1512.18 255.97h5.71M1492.18 257.88h7.62M1506.46 259.78h2.86M1502.66 261.69h5.71M1509.32 261.69h1.90M1512.18 261.69h5.71M1492.18 263.59h7.62M1506.46 265.50h2.86M1502.66 267.40h5.71M1509.32 267.40h1.90M1512.18 267.40h5.71M1492.18 269.31h12.38M1506.46 271.21h2.86M1502.66 273.11h5.71M1509.32 273.11h1.90M1512.18 273.11h5.71M1486.47 284.55h7.62M1482.66 295.97h1.90M1482.66 307.41h1.90M1479.81 311.21h7.62M1522.65 337.88h8.57M1500.75 349.31h8.57M1519.79 349.31h8.57M1522.65 387.42h8.57M1500.75 400.75h8.57M1519.79 400.75h8.57M1498.85 457.90h8.57M1515.03 457.90h8.57M1522.65 480.76h8.57M1500.75 497.90h8.57M1519.79 497.90h8.57M1498.85 556.96h8.57M1515.03 556.96h8.57M1498.85 600.78h8.57M1515.03 600.78h8.57M1498.85 646.50h8.57M1515.03 646.50h8.57M1500.75 661.74h1.90M1502.66 663.64h1.90M1501.70 678.88h9.52M1513.13 678.88h21.90M1536.93 678.88h8.57M1500.75 707.46h1.90M1502.66 709.36h1.90M1496.94 711.27h1.90M1502.66 713.17h1.90M1501.70 728.41h9.52M1513.13 728.41h21.90M1536.93 728.41h8.57M1522.65 766.51h8.57M1500.75 777.94h8.57M1519.79 777.94h8.57M1498.85 837.00h8.57M1515.03 837.00h8.57M1522.65 861.76h8.57M1500.75 878.91h8.57M1519.79 878.91h8.57"/></g><g fill="none" stroke="#fff" stroke-width="1.1"><path d="M12.45 929.4L15.4 932.85L12.45 936.4M19.7 926.4L16.3 929.55L19.7 932.7"/><circle cx="121" cy="926" r="1.6"/><circle cx="127.5" cy="928.5" r="1.6"/><circle cx="121" cy="937" r="1.6"/><path d="M121 927.6V935.4M127.5 930.1C127.5 933 124 933 121.5 935"/><path d="M186 934.5H184.5A3 3 0 0 1 185 928.5A4 4 0 0 1 192.5 928A3 3 0 0 1 193 934.5H191.5M189 936.5V930.5M187 932.5L189 930.5L191 932.5"/><circle cx="217.7" cy="931.5" r="5.3"/><path d="M215.5 929.3L219.9 933.7M219.9 929.3L215.5 933.7"/><path d="M242.5 926L248 936.5H237Z M242.5 929.5V933M242.5 934.2V935"/><path d="M277 927.5V935.5A4.5 1.8 0 0 0 286 935.5V927.5"/><ellipse cx="281.5" cy="927.5" rx="4.5" ry="1.8"/><path d="M1575 934V930A3.8 3.8 0 0 1 1582.6 930V934L1584 935.5H1573.6Z M1577.5 937H1580"/></g></svg>
</body></html>
